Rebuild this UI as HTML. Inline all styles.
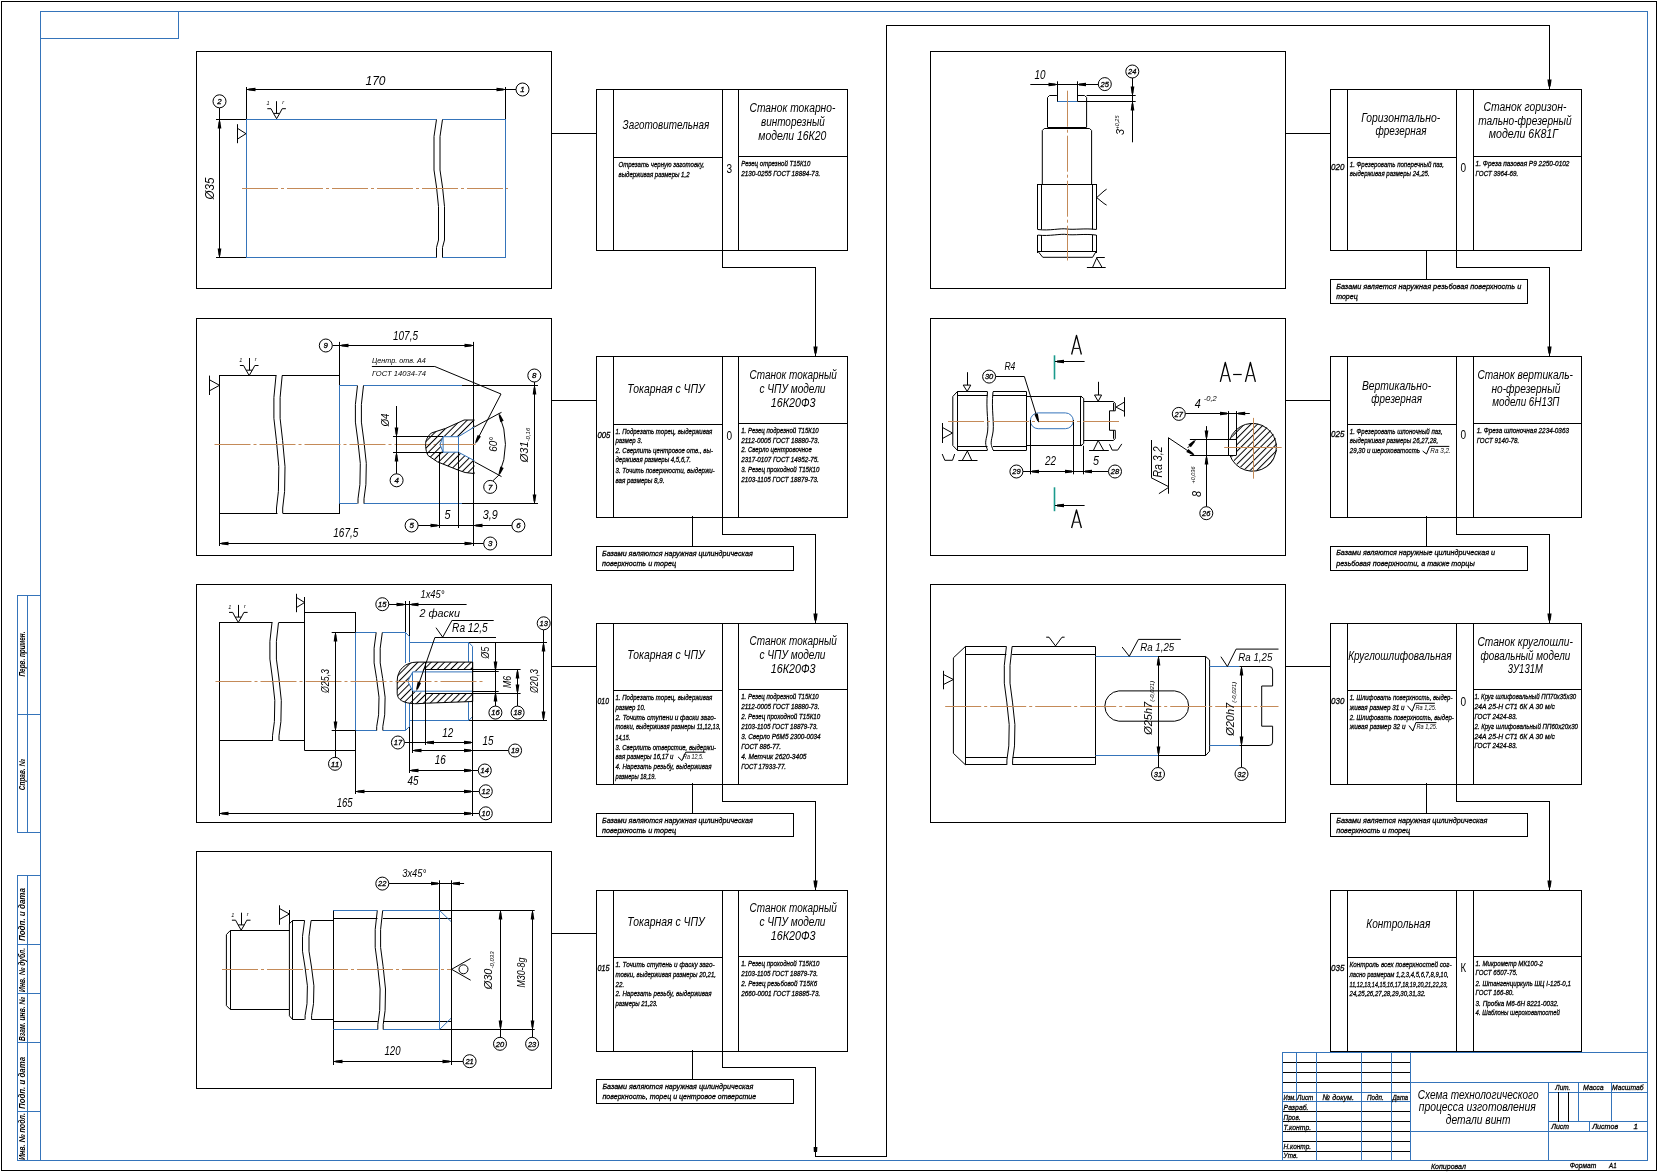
<!DOCTYPE html>
<html><head><meta charset="utf-8"><style>
html,body{margin:0;padding:0;background:#fff;}
svg{display:block;will-change:transform;font-family:"Liberation Sans",sans-serif;}
.t{font-family:"Liberation Sans",sans-serif;font-style:italic;}
.s{stroke:#000;stroke-width:0.3px;}
.w{}
.u{font-family:"Liberation Sans",sans-serif;}
</style></head><body>
<svg width="1658" height="1172" viewBox="0 0 1658 1172">
<rect width="1658" height="1172" fill="#fff"/>
<rect x="1.5" y="1.5" width="1655" height="1169" fill="none" stroke="#000" stroke-width="1"/>
<rect x="40.5" y="11.5" width="1607" height="1149" fill="none" stroke="#3574ba" stroke-width="1"/>
<line x1="40" y1="38.5" x2="179" y2="38.5" stroke="#3574ba" stroke-width="1"/>
<line x1="178.5" y1="11" x2="178.5" y2="39" stroke="#3574ba" stroke-width="1"/>
<line x1="17.5" y1="595" x2="17.5" y2="833" stroke="#3574ba" stroke-width="1"/>
<line x1="27.5" y1="595" x2="27.5" y2="833" stroke="#3574ba" stroke-width="1"/>
<line x1="17" y1="595.5" x2="41" y2="595.5" stroke="#3574ba" stroke-width="1"/>
<line x1="17" y1="714.5" x2="41" y2="714.5" stroke="#3574ba" stroke-width="1"/>
<line x1="17" y1="832.5" x2="41" y2="832.5" stroke="#3574ba" stroke-width="1"/>
<line x1="17.5" y1="875" x2="17.5" y2="1161" stroke="#3574ba" stroke-width="1"/>
<line x1="27.5" y1="875" x2="27.5" y2="1161" stroke="#3574ba" stroke-width="1"/>
<line x1="17" y1="875.5" x2="41" y2="875.5" stroke="#3574ba" stroke-width="1"/>
<line x1="17" y1="944.5" x2="41" y2="944.5" stroke="#3574ba" stroke-width="1"/>
<line x1="17" y1="993.5" x2="41" y2="993.5" stroke="#3574ba" stroke-width="1"/>
<line x1="17" y1="1042.5" x2="41" y2="1042.5" stroke="#3574ba" stroke-width="1"/>
<line x1="17" y1="1111.5" x2="41" y2="1111.5" stroke="#3574ba" stroke-width="1"/>
<line x1="17" y1="1160.5" x2="41" y2="1160.5" stroke="#3574ba" stroke-width="1"/>
<rect x="196.5" y="51.5" width="355" height="237" fill="none" stroke="#000" stroke-width="1"/>
<rect x="196.5" y="318.5" width="355" height="237" fill="none" stroke="#000" stroke-width="1"/>
<rect x="196.5" y="584.5" width="355" height="238" fill="none" stroke="#000" stroke-width="1"/>
<rect x="196.5" y="851.5" width="355" height="237" fill="none" stroke="#000" stroke-width="1"/>
<rect x="930.5" y="51.5" width="355" height="237" fill="none" stroke="#000" stroke-width="1"/>
<rect x="930.5" y="318.5" width="355" height="237" fill="none" stroke="#000" stroke-width="1"/>
<rect x="930.5" y="584.5" width="355" height="238" fill="none" stroke="#000" stroke-width="1"/>
<rect x="596.5" y="89.5" width="251" height="161" fill="none" stroke="#000" stroke-width="1"/>
<line x1="613.5" y1="89" x2="613.5" y2="251" stroke="#000" stroke-width="1"/>
<line x1="722.5" y1="89" x2="722.5" y2="251" stroke="#000" stroke-width="1"/>
<line x1="738.5" y1="89" x2="738.5" y2="251" stroke="#000" stroke-width="1"/>
<line x1="613" y1="157.5" x2="723" y2="157.5" stroke="#000" stroke-width="1"/>
<line x1="738" y1="156.5" x2="848" y2="156.5" stroke="#000" stroke-width="1"/>
<rect x="1330.5" y="89.5" width="251" height="161" fill="none" stroke="#000" stroke-width="1"/>
<line x1="1347.5" y1="89" x2="1347.5" y2="251" stroke="#000" stroke-width="1"/>
<line x1="1456.5" y1="89" x2="1456.5" y2="251" stroke="#000" stroke-width="1"/>
<line x1="1473.5" y1="89" x2="1473.5" y2="251" stroke="#000" stroke-width="1"/>
<line x1="1347" y1="157.5" x2="1457" y2="157.5" stroke="#000" stroke-width="1"/>
<line x1="1473" y1="156.5" x2="1582" y2="156.5" stroke="#000" stroke-width="1"/>
<rect x="596.5" y="356.5" width="251" height="161" fill="none" stroke="#000" stroke-width="1"/>
<line x1="613.5" y1="356" x2="613.5" y2="518" stroke="#000" stroke-width="1"/>
<line x1="722.5" y1="356" x2="722.5" y2="518" stroke="#000" stroke-width="1"/>
<line x1="738.5" y1="356" x2="738.5" y2="518" stroke="#000" stroke-width="1"/>
<line x1="613" y1="424.5" x2="723" y2="424.5" stroke="#000" stroke-width="1"/>
<line x1="738" y1="423.5" x2="848" y2="423.5" stroke="#000" stroke-width="1"/>
<rect x="1330.5" y="356.5" width="251" height="161" fill="none" stroke="#000" stroke-width="1"/>
<line x1="1347.5" y1="356" x2="1347.5" y2="518" stroke="#000" stroke-width="1"/>
<line x1="1456.5" y1="356" x2="1456.5" y2="518" stroke="#000" stroke-width="1"/>
<line x1="1473.5" y1="356" x2="1473.5" y2="518" stroke="#000" stroke-width="1"/>
<line x1="1347" y1="424.5" x2="1457" y2="424.5" stroke="#000" stroke-width="1"/>
<line x1="1473" y1="423.5" x2="1582" y2="423.5" stroke="#000" stroke-width="1"/>
<rect x="596.5" y="623.5" width="251" height="161" fill="none" stroke="#000" stroke-width="1"/>
<line x1="613.5" y1="623" x2="613.5" y2="785" stroke="#000" stroke-width="1"/>
<line x1="722.5" y1="623" x2="722.5" y2="785" stroke="#000" stroke-width="1"/>
<line x1="738.5" y1="623" x2="738.5" y2="785" stroke="#000" stroke-width="1"/>
<line x1="613" y1="690.5" x2="723" y2="690.5" stroke="#000" stroke-width="1"/>
<line x1="738" y1="689.5" x2="848" y2="689.5" stroke="#000" stroke-width="1"/>
<rect x="1330.5" y="623.5" width="251" height="161" fill="none" stroke="#000" stroke-width="1"/>
<line x1="1347.5" y1="623" x2="1347.5" y2="785" stroke="#000" stroke-width="1"/>
<line x1="1456.5" y1="623" x2="1456.5" y2="785" stroke="#000" stroke-width="1"/>
<line x1="1473.5" y1="623" x2="1473.5" y2="785" stroke="#000" stroke-width="1"/>
<line x1="1347" y1="690.5" x2="1457" y2="690.5" stroke="#000" stroke-width="1"/>
<line x1="1473" y1="689.5" x2="1582" y2="689.5" stroke="#000" stroke-width="1"/>
<rect x="596.5" y="890.5" width="251" height="161" fill="none" stroke="#000" stroke-width="1"/>
<line x1="613.5" y1="890" x2="613.5" y2="1052" stroke="#000" stroke-width="1"/>
<line x1="722.5" y1="890" x2="722.5" y2="1052" stroke="#000" stroke-width="1"/>
<line x1="738.5" y1="890" x2="738.5" y2="1052" stroke="#000" stroke-width="1"/>
<line x1="613" y1="957.5" x2="723" y2="957.5" stroke="#000" stroke-width="1"/>
<line x1="738" y1="956.5" x2="848" y2="956.5" stroke="#000" stroke-width="1"/>
<rect x="1330.5" y="890.5" width="251" height="161" fill="none" stroke="#000" stroke-width="1"/>
<line x1="1347.5" y1="890" x2="1347.5" y2="1052" stroke="#000" stroke-width="1"/>
<line x1="1456.5" y1="890" x2="1456.5" y2="1052" stroke="#000" stroke-width="1"/>
<line x1="1473.5" y1="890" x2="1473.5" y2="1052" stroke="#000" stroke-width="1"/>
<line x1="1347" y1="957.5" x2="1457" y2="957.5" stroke="#000" stroke-width="1"/>
<line x1="1473" y1="956.5" x2="1582" y2="956.5" stroke="#000" stroke-width="1"/>
<line x1="551" y1="133.5" x2="597" y2="133.5" stroke="#000" stroke-width="1"/>
<line x1="551" y1="400.5" x2="597" y2="400.5" stroke="#000" stroke-width="1"/>
<line x1="551" y1="666.5" x2="597" y2="666.5" stroke="#000" stroke-width="1"/>
<line x1="551" y1="933.5" x2="597" y2="933.5" stroke="#000" stroke-width="1"/>
<line x1="1285" y1="133.5" x2="1331" y2="133.5" stroke="#000" stroke-width="1"/>
<line x1="1285" y1="400.5" x2="1331" y2="400.5" stroke="#000" stroke-width="1"/>
<line x1="1285" y1="666.5" x2="1331" y2="666.5" stroke="#000" stroke-width="1"/>
<line x1="722.5" y1="250" x2="722.5" y2="268" stroke="#000" stroke-width="1"/>
<line x1="722" y1="267.5" x2="816" y2="267.5" stroke="#000" stroke-width="1"/>
<line x1="815.5" y1="267" x2="815.5" y2="357" stroke="#000" stroke-width="1"/>
<path d="M813.4 346.5 L817.6 346.5 L816.6 353.5 L814.4 353.5 Z" fill="#000"/>
<line x1="722.5" y1="517" x2="722.5" y2="535" stroke="#000" stroke-width="1"/>
<line x1="722" y1="534.5" x2="816" y2="534.5" stroke="#000" stroke-width="1"/>
<line x1="815.5" y1="534" x2="815.5" y2="624" stroke="#000" stroke-width="1"/>
<path d="M813.4 613.5 L817.6 613.5 L816.6 620.5 L814.4 620.5 Z" fill="#000"/>
<line x1="722.5" y1="784" x2="722.5" y2="802" stroke="#000" stroke-width="1"/>
<line x1="722" y1="801.5" x2="816" y2="801.5" stroke="#000" stroke-width="1"/>
<line x1="815.5" y1="801" x2="815.5" y2="891" stroke="#000" stroke-width="1"/>
<path d="M813.4 880.5 L817.6 880.5 L816.6 887.5 L814.4 887.5 Z" fill="#000"/>
<line x1="722.5" y1="1050" x2="722.5" y2="1068" stroke="#000" stroke-width="1"/>
<line x1="722" y1="1067.5" x2="816" y2="1067.5" stroke="#000" stroke-width="1"/>
<line x1="815.5" y1="1067" x2="815.5" y2="1157" stroke="#000" stroke-width="1"/>
<line x1="815" y1="1156.5" x2="887" y2="1156.5" stroke="#000" stroke-width="1"/>
<path d="M813.6 1147 L817.4 1147 L817.1 1152 L813.9 1152 Z" fill="#000"/>
<line x1="886.5" y1="25" x2="886.5" y2="1157" stroke="#000" stroke-width="1"/>
<line x1="886" y1="25.5" x2="1550" y2="25.5" stroke="#000" stroke-width="1"/>
<line x1="1549.5" y1="25" x2="1549.5" y2="90" stroke="#000" stroke-width="1"/>
<path d="M1547.4 79.5 L1551.6 79.5 L1550.6 86.5 L1548.4 86.5 Z" fill="#000"/>
<line x1="1456.5" y1="250" x2="1456.5" y2="268" stroke="#000" stroke-width="1"/>
<line x1="1456" y1="267.5" x2="1550" y2="267.5" stroke="#000" stroke-width="1"/>
<line x1="1549.5" y1="267" x2="1549.5" y2="357" stroke="#000" stroke-width="1"/>
<path d="M1547.4 346.5 L1551.6 346.5 L1550.6 353.5 L1548.4 353.5 Z" fill="#000"/>
<line x1="1456.5" y1="517" x2="1456.5" y2="535" stroke="#000" stroke-width="1"/>
<line x1="1456" y1="534.5" x2="1550" y2="534.5" stroke="#000" stroke-width="1"/>
<line x1="1549.5" y1="534" x2="1549.5" y2="624" stroke="#000" stroke-width="1"/>
<path d="M1547.4 613.5 L1551.6 613.5 L1550.6 620.5 L1548.4 620.5 Z" fill="#000"/>
<line x1="1456.5" y1="784" x2="1456.5" y2="802" stroke="#000" stroke-width="1"/>
<line x1="1456" y1="801.5" x2="1550" y2="801.5" stroke="#000" stroke-width="1"/>
<line x1="1549.5" y1="801" x2="1549.5" y2="891" stroke="#000" stroke-width="1"/>
<path d="M1547.4 880.5 L1551.6 880.5 L1550.6 887.5 L1548.4 887.5 Z" fill="#000"/>
<rect x="596.5" y="546.5" width="197" height="24" fill="none" stroke="#000" stroke-width="1"/>
<rect x="596.5" y="813.5" width="197" height="23" fill="none" stroke="#000" stroke-width="1"/>
<rect x="596.5" y="1079.5" width="197" height="24" fill="none" stroke="#000" stroke-width="1"/>
<line x1="692.5" y1="516" x2="692.5" y2="547" stroke="#000" stroke-width="1"/>
<line x1="692.5" y1="783" x2="692.5" y2="814" stroke="#000" stroke-width="1"/>
<line x1="692.5" y1="1050" x2="692.5" y2="1080" stroke="#000" stroke-width="1"/>
<rect x="1330.5" y="279.5" width="197" height="24" fill="none" stroke="#000" stroke-width="1"/>
<rect x="1330.5" y="546.5" width="197" height="24" fill="none" stroke="#000" stroke-width="1"/>
<rect x="1330.5" y="813.5" width="197" height="23" fill="none" stroke="#000" stroke-width="1"/>
<line x1="1426.5" y1="250" x2="1426.5" y2="280" stroke="#000" stroke-width="1"/>
<line x1="1426.5" y1="516" x2="1426.5" y2="547" stroke="#000" stroke-width="1"/>
<line x1="1426.5" y1="783" x2="1426.5" y2="814" stroke="#000" stroke-width="1"/>
<line x1="1282" y1="1052.5" x2="1648" y2="1052.5" stroke="#3574ba" stroke-width="1"/>
<line x1="1282" y1="1062.5" x2="1411" y2="1062.5" stroke="#000" stroke-width="1"/>
<line x1="1282" y1="1072.5" x2="1411" y2="1072.5" stroke="#000" stroke-width="1"/>
<line x1="1282" y1="1111.5" x2="1411" y2="1111.5" stroke="#000" stroke-width="1"/>
<line x1="1282" y1="1121.5" x2="1411" y2="1121.5" stroke="#000" stroke-width="1"/>
<line x1="1282" y1="1141.5" x2="1411" y2="1141.5" stroke="#000" stroke-width="1"/>
<line x1="1282" y1="1151.5" x2="1411" y2="1151.5" stroke="#000" stroke-width="1"/>
<line x1="1282" y1="1092.5" x2="1411" y2="1092.5" stroke="#3574ba" stroke-width="1"/>
<line x1="1282" y1="1101.5" x2="1411" y2="1101.5" stroke="#3574ba" stroke-width="1"/>
<line x1="1410" y1="1082.5" x2="1648" y2="1082.5" stroke="#3574ba" stroke-width="1"/>
<line x1="1283" y1="1082.5" x2="1410" y2="1082.5" stroke="#000" stroke-width="1"/>
<line x1="1410" y1="1131.5" x2="1648" y2="1131.5" stroke="#3574ba" stroke-width="1"/>
<line x1="1283" y1="1131.5" x2="1410" y2="1131.5" stroke="#000" stroke-width="1"/>
<line x1="1548.5" y1="1082" x2="1548.5" y2="1161" stroke="#3574ba" stroke-width="1"/>
<line x1="1548" y1="1092.5" x2="1648" y2="1092.5" stroke="#3574ba" stroke-width="1"/>
<line x1="1548" y1="1121.5" x2="1648" y2="1121.5" stroke="#3574ba" stroke-width="1"/>
<line x1="1578.5" y1="1082" x2="1578.5" y2="1122" stroke="#3574ba" stroke-width="1"/>
<line x1="1611.5" y1="1082" x2="1611.5" y2="1122" stroke="#3574ba" stroke-width="1"/>
<line x1="1589.5" y1="1121" x2="1589.5" y2="1132" stroke="#3574ba" stroke-width="1"/>
<line x1="1558.5" y1="1092" x2="1558.5" y2="1122" stroke="#000" stroke-width="1"/>
<line x1="1568.5" y1="1092" x2="1568.5" y2="1122" stroke="#000" stroke-width="1"/>
<line x1="1282.5" y1="1052" x2="1282.5" y2="1161" stroke="#3574ba" stroke-width="1"/>
<line x1="1316.5" y1="1052" x2="1316.5" y2="1161" stroke="#3574ba" stroke-width="1"/>
<line x1="1361.5" y1="1052" x2="1361.5" y2="1161" stroke="#3574ba" stroke-width="1"/>
<line x1="1391.5" y1="1052" x2="1391.5" y2="1161" stroke="#3574ba" stroke-width="1"/>
<line x1="1410.5" y1="1052" x2="1410.5" y2="1161" stroke="#3574ba" stroke-width="1"/>
<line x1="1296.5" y1="1052" x2="1296.5" y2="1102" stroke="#3574ba" stroke-width="1"/>
<text x="622.6" y="128.8" font-size="13.5" fill="#000" textLength="86.6" lengthAdjust="spacingAndGlyphs" class="t w">Заготовительная</text>
<text x="749.5" y="112.1" font-size="12.5" fill="#000" textLength="85.9" lengthAdjust="spacingAndGlyphs" class="t w">Станок токарно-</text>
<text x="761.0" y="125.8" font-size="12.5" fill="#000" textLength="63.8" lengthAdjust="spacingAndGlyphs" class="t w">винторезный</text>
<text x="758.3" y="139.6" font-size="12.5" fill="#000" textLength="68.0" lengthAdjust="spacingAndGlyphs" class="t w">модели 16К20</text>
<text x="618.5" y="167.3" font-size="7.8" fill="#000" textLength="85.7" lengthAdjust="spacingAndGlyphs" class="t s">Отрезать черную заготовку,</text>
<text x="618.5" y="177.2" font-size="7.8" fill="#000" textLength="71.0" lengthAdjust="spacingAndGlyphs" class="t s">выдерживая размеры 1,2</text>
<text x="741.2" y="165.8" font-size="7.8" fill="#000" textLength="69.1" lengthAdjust="spacingAndGlyphs" class="t s">Резец отрезной Т15К10</text>
<text x="741.2" y="175.9" font-size="7.8" fill="#000" textLength="79.0" lengthAdjust="spacingAndGlyphs" class="t s">2130-0255 ГОСТ 18884-73.</text>
<text x="627.2" y="392.8" font-size="13" fill="#000" textLength="77.5" lengthAdjust="spacingAndGlyphs" class="t w">Токарная с ЧПУ</text>
<text x="749.5" y="379.1" font-size="12.5" fill="#000" textLength="87.4" lengthAdjust="spacingAndGlyphs" class="t w">Станок токарный</text>
<text x="759.4" y="392.8" font-size="12.5" fill="#000" textLength="66.1" lengthAdjust="spacingAndGlyphs" class="t w">с ЧПУ модели</text>
<text x="770.8" y="406.5" font-size="12.5" fill="#000" textLength="44.8" lengthAdjust="spacingAndGlyphs" class="t w">16К20Ф3</text>
<text x="597.5" y="438.0" font-size="9" fill="#000" textLength="12.9" lengthAdjust="spacingAndGlyphs" class="t s">005</text>
<text x="615.5" y="434.3" font-size="7.8" fill="#000" textLength="96.8" lengthAdjust="spacingAndGlyphs" class="t s">1. Подрезать торец, выдерживая</text>
<text x="615.5" y="443.1" font-size="7.8" fill="#000" textLength="26.9" lengthAdjust="spacingAndGlyphs" class="t s">размер 3.</text>
<text x="615.5" y="453.3" font-size="7.8" fill="#000" textLength="97.5" lengthAdjust="spacingAndGlyphs" class="t s">2. Сверлить центровое отв., вы-</text>
<text x="615.5" y="462.4" font-size="7.8" fill="#000" textLength="75.5" lengthAdjust="spacingAndGlyphs" class="t s">держивая размеры 4,5,6,7.</text>
<text x="615.5" y="473.0" font-size="7.8" fill="#000" textLength="99.1" lengthAdjust="spacingAndGlyphs" class="t s">3. Точить поверхности, выдержи-</text>
<text x="615.5" y="482.9" font-size="7.8" fill="#000" textLength="48.9" lengthAdjust="spacingAndGlyphs" class="t s">вая размеры 8,9.</text>
<text x="741.2" y="432.8" font-size="7.8" fill="#000" textLength="77.5" lengthAdjust="spacingAndGlyphs" class="t s">1. Резец подрезной Т15К10</text>
<text x="741.2" y="442.6" font-size="7.8" fill="#000" textLength="78.2" lengthAdjust="spacingAndGlyphs" class="t s">2112-0005 ГОСТ 18880-73.</text>
<text x="741.2" y="452.0" font-size="7.8" fill="#000" textLength="70.6" lengthAdjust="spacingAndGlyphs" class="t s">2. Сверло центровочное</text>
<text x="741.2" y="461.6" font-size="7.8" fill="#000" textLength="77.9" lengthAdjust="spacingAndGlyphs" class="t s">2317-0107 ГОСТ 14952-75.</text>
<text x="741.2" y="472.3" font-size="7.8" fill="#000" textLength="78.2" lengthAdjust="spacingAndGlyphs" class="t s">3. Резец проходной Т15К10</text>
<text x="741.2" y="481.9" font-size="7.8" fill="#000" textLength="77.5" lengthAdjust="spacingAndGlyphs" class="t s">2103-1105 ГОСТ 18879-73.</text>
<text x="627.2" y="658.8" font-size="13" fill="#000" textLength="77.5" lengthAdjust="spacingAndGlyphs" class="t w">Токарная с ЧПУ</text>
<text x="749.5" y="645.1" font-size="12.5" fill="#000" textLength="87.4" lengthAdjust="spacingAndGlyphs" class="t w">Станок токарный</text>
<text x="759.4" y="658.8" font-size="12.5" fill="#000" textLength="66.1" lengthAdjust="spacingAndGlyphs" class="t w">с ЧПУ модели</text>
<text x="770.8" y="672.5" font-size="12.5" fill="#000" textLength="44.8" lengthAdjust="spacingAndGlyphs" class="t w">16К20Ф3</text>
<text x="597.5" y="704.3" font-size="9" fill="#000" textLength="11.5" lengthAdjust="spacingAndGlyphs" class="t s">010</text>
<text x="615.5" y="699.8" font-size="7.8" fill="#000" textLength="96.8" lengthAdjust="spacingAndGlyphs" class="t s">1. Подрезать торец, выдерживая</text>
<text x="615.5" y="709.6" font-size="7.8" fill="#000" textLength="29.9" lengthAdjust="spacingAndGlyphs" class="t s">размер 10.</text>
<text x="615.5" y="720.0" font-size="7.8" fill="#000" textLength="100.5" lengthAdjust="spacingAndGlyphs" class="t s">2. Точить ступени и фаски заго-</text>
<text x="615.5" y="729.4" font-size="7.8" fill="#000" textLength="105.1" lengthAdjust="spacingAndGlyphs" class="t s">товки, выдерживая размеры 11,12,13,</text>
<text x="615.5" y="739.7" font-size="7.8" fill="#000" textLength="14.7" lengthAdjust="spacingAndGlyphs" class="t s">14,15.</text>
<text x="615.5" y="749.9" font-size="7.8" fill="#000" textLength="100.5" lengthAdjust="spacingAndGlyphs" class="t s">3. Сверлить отверстие, выдержи-</text>
<text x="615.5" y="759.0" font-size="7.8" fill="#000" textLength="58.0" lengthAdjust="spacingAndGlyphs" class="t s">вая размеры 16,17 и</text>
<text x="615.5" y="768.9" font-size="7.8" fill="#000" textLength="96.0" lengthAdjust="spacingAndGlyphs" class="t s">4. Нарезать резьбу, выдерживая</text>
<text x="615.5" y="778.8" font-size="7.8" fill="#000" textLength="40.5" lengthAdjust="spacingAndGlyphs" class="t s">размеры 18,19.</text>
<text x="741.2" y="699.0" font-size="7.8" fill="#000" textLength="77.5" lengthAdjust="spacingAndGlyphs" class="t s">1. Резец подрезной Т15К10</text>
<text x="741.2" y="708.9" font-size="7.8" fill="#000" textLength="78.2" lengthAdjust="spacingAndGlyphs" class="t s">2112-0005 ГОСТ 18880-73.</text>
<text x="741.2" y="718.8" font-size="7.8" fill="#000" textLength="79.0" lengthAdjust="spacingAndGlyphs" class="t s">2. Резец проходной Т15К10</text>
<text x="741.2" y="728.6" font-size="7.8" fill="#000" textLength="76.8" lengthAdjust="spacingAndGlyphs" class="t s">2103-1105 ГОСТ 18879-73.</text>
<text x="741.2" y="738.5" font-size="7.8" fill="#000" textLength="79.4" lengthAdjust="spacingAndGlyphs" class="t s">3. Сверло Р6М5 2300-0034</text>
<text x="741.2" y="749.2" font-size="7.8" fill="#000" textLength="39.9" lengthAdjust="spacingAndGlyphs" class="t s">ГОСТ 886-77.</text>
<text x="741.2" y="759.0" font-size="7.8" fill="#000" textLength="65.3" lengthAdjust="spacingAndGlyphs" class="t s">4. Метчик 2620-3405</text>
<text x="741.2" y="768.9" font-size="7.8" fill="#000" textLength="44.8" lengthAdjust="spacingAndGlyphs" class="t s">ГОСТ 17933-77.</text>
<text x="627.2" y="925.8" font-size="13" fill="#000" textLength="77.5" lengthAdjust="spacingAndGlyphs" class="t w">Токарная с ЧПУ</text>
<text x="749.5" y="912.1" font-size="12.5" fill="#000" textLength="87.4" lengthAdjust="spacingAndGlyphs" class="t w">Станок токарный</text>
<text x="759.4" y="925.8" font-size="12.5" fill="#000" textLength="66.1" lengthAdjust="spacingAndGlyphs" class="t w">с ЧПУ модели</text>
<text x="770.8" y="939.5" font-size="12.5" fill="#000" textLength="44.8" lengthAdjust="spacingAndGlyphs" class="t w">16К20Ф3</text>
<text x="597.5" y="971.3" font-size="9" fill="#000" textLength="12.0" lengthAdjust="spacingAndGlyphs" class="t s">015</text>
<text x="615.5" y="966.8" font-size="7.8" fill="#000" textLength="99.1" lengthAdjust="spacingAndGlyphs" class="t s">1. Точить ступень и фаску заго-</text>
<text x="615.5" y="976.6" font-size="7.8" fill="#000" textLength="100.5" lengthAdjust="spacingAndGlyphs" class="t s">товки, выдерживая размеры 20,21,</text>
<text x="615.5" y="986.5" font-size="7.8" fill="#000" textLength="8.6" lengthAdjust="spacingAndGlyphs" class="t s">22.</text>
<text x="615.5" y="996.4" font-size="7.8" fill="#000" textLength="96.0" lengthAdjust="spacingAndGlyphs" class="t s">2. Нарезать резьбу, выдерживая</text>
<text x="615.5" y="1005.5" font-size="7.8" fill="#000" textLength="42.1" lengthAdjust="spacingAndGlyphs" class="t s">размеры 21,23.</text>
<text x="741.2" y="966.0" font-size="7.8" fill="#000" textLength="78.2" lengthAdjust="spacingAndGlyphs" class="t s">1. Резец проходной Т15К10</text>
<text x="741.2" y="975.9" font-size="7.8" fill="#000" textLength="76.8" lengthAdjust="spacingAndGlyphs" class="t s">2103-1105 ГОСТ 18879-73.</text>
<text x="741.2" y="985.8" font-size="7.8" fill="#000" textLength="76.0" lengthAdjust="spacingAndGlyphs" class="t s">2. Резец резьбовой Т15К6</text>
<text x="741.2" y="995.6" font-size="7.8" fill="#000" textLength="79.0" lengthAdjust="spacingAndGlyphs" class="t s">2660-0001 ГОСТ 18885-73.</text>
<text x="1361.2" y="121.7" font-size="12.5" fill="#000" textLength="79.0" lengthAdjust="spacingAndGlyphs" class="t w">Горизонтально-</text>
<text x="1375.6" y="134.6" font-size="12.5" fill="#000" textLength="50.9" lengthAdjust="spacingAndGlyphs" class="t w">фрезерная</text>
<text x="1483.5" y="111.0" font-size="12.5" fill="#000" textLength="82.9" lengthAdjust="spacingAndGlyphs" class="t w">Станок горизон-</text>
<text x="1478.2" y="124.7" font-size="12.5" fill="#000" textLength="93.5" lengthAdjust="spacingAndGlyphs" class="t w">тально-фрезерный</text>
<text x="1488.8" y="138.4" font-size="12.5" fill="#000" textLength="69.2" lengthAdjust="spacingAndGlyphs" class="t w">модели 6К81Г</text>
<text x="1331.0" y="170.3" font-size="9" fill="#000" textLength="13.4" lengthAdjust="spacingAndGlyphs" class="t s">020</text>
<text x="1349.8" y="166.8" font-size="7.8" fill="#000" textLength="94.2" lengthAdjust="spacingAndGlyphs" class="t s">1. Фрезеровать поперечный паз,</text>
<text x="1349.8" y="176.4" font-size="7.8" fill="#000" textLength="79.8" lengthAdjust="spacingAndGlyphs" class="t s">выдерживая размеры 24,25.</text>
<text x="1475.6" y="165.8" font-size="7.8" fill="#000" textLength="93.8" lengthAdjust="spacingAndGlyphs" class="t s">1. Фреза пазовая Р9 2250-0102</text>
<text x="1475.6" y="175.6" font-size="7.8" fill="#000" textLength="42.6" lengthAdjust="spacingAndGlyphs" class="t s">ГОСТ 3964-69.</text>
<text x="1361.9" y="389.7" font-size="12.5" fill="#000" textLength="69.2" lengthAdjust="spacingAndGlyphs" class="t w">Вертикально-</text>
<text x="1371.3" y="403.4" font-size="12.5" fill="#000" textLength="50.7" lengthAdjust="spacingAndGlyphs" class="t w">фрезерная</text>
<text x="1477.4" y="378.8" font-size="12.5" fill="#000" textLength="95.5" lengthAdjust="spacingAndGlyphs" class="t w">Станок вертикаль-</text>
<text x="1491.4" y="392.5" font-size="12.5" fill="#000" textLength="68.9" lengthAdjust="spacingAndGlyphs" class="t w">но-фрезерный</text>
<text x="1492.3" y="406.2" font-size="12.5" fill="#000" textLength="67.2" lengthAdjust="spacingAndGlyphs" class="t w">модели 6Н13П</text>
<text x="1331.0" y="437.3" font-size="9" fill="#000" textLength="13.4" lengthAdjust="spacingAndGlyphs" class="t s">025</text>
<text x="1349.8" y="434.3" font-size="7.8" fill="#000" textLength="92.7" lengthAdjust="spacingAndGlyphs" class="t s">1. Фрезеровать шпоночный паз,</text>
<text x="1349.8" y="443.4" font-size="7.8" fill="#000" textLength="88.4" lengthAdjust="spacingAndGlyphs" class="t s">выдерживая размеры 26,27,28,</text>
<text x="1349.8" y="452.5" font-size="7.8" fill="#000" textLength="70.2" lengthAdjust="spacingAndGlyphs" class="t s">29,30 и шероховатость</text>
<text x="1476.7" y="432.8" font-size="7.8" fill="#000" textLength="92.3" lengthAdjust="spacingAndGlyphs" class="t s">1. Фреза шпоночная 2234-0363</text>
<text x="1476.7" y="442.6" font-size="7.8" fill="#000" textLength="42.5" lengthAdjust="spacingAndGlyphs" class="t s">ГОСТ 9140-78.</text>
<text x="1348.2" y="659.5" font-size="13" fill="#000" textLength="103.4" lengthAdjust="spacingAndGlyphs" class="t w">Круглошлифовальная</text>
<text x="1477.4" y="645.8" font-size="12.5" fill="#000" textLength="95.5" lengthAdjust="spacingAndGlyphs" class="t w">Станок круглошли-</text>
<text x="1480.5" y="659.5" font-size="12.5" fill="#000" textLength="89.7" lengthAdjust="spacingAndGlyphs" class="t w">фовальный модели</text>
<text x="1507.8" y="673.2" font-size="12.5" fill="#000" textLength="35.0" lengthAdjust="spacingAndGlyphs" class="t w">3У131М</text>
<text x="1331.0" y="704.3" font-size="9" fill="#000" textLength="13.4" lengthAdjust="spacingAndGlyphs" class="t s">030</text>
<text x="1349.8" y="699.8" font-size="7.8" fill="#000" textLength="102.6" lengthAdjust="spacingAndGlyphs" class="t s">1. Шлифовать поверхность, выдер-</text>
<text x="1349.8" y="709.6" font-size="7.8" fill="#000" textLength="54.7" lengthAdjust="spacingAndGlyphs" class="t s">живая размер 31 и</text>
<text x="1349.8" y="719.5" font-size="7.8" fill="#000" textLength="104.1" lengthAdjust="spacingAndGlyphs" class="t s">2. Шлифовать поверхность, выдер-</text>
<text x="1349.8" y="729.4" font-size="7.8" fill="#000" textLength="55.7" lengthAdjust="spacingAndGlyphs" class="t s">живая размер 32 и</text>
<text x="1474.4" y="699.0" font-size="7.8" fill="#000" textLength="101.8" lengthAdjust="spacingAndGlyphs" class="t s">1. Круг шлифовальный ПП70х35х30</text>
<text x="1474.4" y="708.9" font-size="7.8" fill="#000" textLength="80.6" lengthAdjust="spacingAndGlyphs" class="t s">24А 25-Н СТ1 6К  А 30 м/с</text>
<text x="1474.4" y="718.8" font-size="7.8" fill="#000" textLength="42.9" lengthAdjust="spacingAndGlyphs" class="t s">ГОСТ 2424-83.</text>
<text x="1474.4" y="728.6" font-size="7.8" fill="#000" textLength="103.6" lengthAdjust="spacingAndGlyphs" class="t s">2. Круг шлифовальный ПП60х20х30</text>
<text x="1474.4" y="738.5" font-size="7.8" fill="#000" textLength="80.6" lengthAdjust="spacingAndGlyphs" class="t s">24А 25-Н СТ1 6К  А 30 м/с</text>
<text x="1474.4" y="748.4" font-size="7.8" fill="#000" textLength="42.9" lengthAdjust="spacingAndGlyphs" class="t s">ГОСТ 2424-83.</text>
<text x="1366.2" y="927.7" font-size="13" fill="#000" textLength="64.1" lengthAdjust="spacingAndGlyphs" class="t w">Контрольная</text>
<text x="1331.0" y="971.3" font-size="9" fill="#000" textLength="13.4" lengthAdjust="spacingAndGlyphs" class="t s">035</text>
<text x="1349.5" y="966.8" font-size="7.8" fill="#000" textLength="102.1" lengthAdjust="spacingAndGlyphs" class="t s">Контроль всех поверхностей сог-</text>
<text x="1349.5" y="976.6" font-size="7.8" fill="#000" textLength="99.1" lengthAdjust="spacingAndGlyphs" class="t s">ласно размерам 1,2,3,4,5,6,7,8,9,10,</text>
<text x="1349.5" y="986.5" font-size="7.8" fill="#000" textLength="98.3" lengthAdjust="spacingAndGlyphs" class="t s">11,12,13,14,15,16,17,18,19,20,21,22,23,</text>
<text x="1349.5" y="996.4" font-size="7.8" fill="#000" textLength="76.3" lengthAdjust="spacingAndGlyphs" class="t s">24,25,26,27,28,29,30,31,32.</text>
<text x="1475.6" y="966.0" font-size="7.8" fill="#000" textLength="67.2" lengthAdjust="spacingAndGlyphs" class="t s">1. Микрометр МК100-2</text>
<text x="1475.6" y="975.4" font-size="7.8" fill="#000" textLength="42.1" lengthAdjust="spacingAndGlyphs" class="t s">ГОСТ 6507-75.</text>
<text x="1475.6" y="985.8" font-size="7.8" fill="#000" textLength="95.3" lengthAdjust="spacingAndGlyphs" class="t s">2. Штангенциркуль ШЦ I-125-0,1</text>
<text x="1475.6" y="995.2" font-size="7.8" fill="#000" textLength="38.3" lengthAdjust="spacingAndGlyphs" class="t s">ГОСТ 166-80.</text>
<text x="1475.6" y="1005.5" font-size="7.8" fill="#000" textLength="83.2" lengthAdjust="spacingAndGlyphs" class="t s">3. Пробка М6-6Н 8221-0032.</text>
<text x="1475.6" y="1014.9" font-size="7.8" fill="#000" textLength="84.2" lengthAdjust="spacingAndGlyphs" class="t s">4. Шаблоны шероховатостей</text>
<text x="602" y="555.8" font-size="7.5" fill="#000" textLength="150.8" lengthAdjust="spacingAndGlyphs" class="t s">Базами являются наружная цилиндрическая</text>
<text x="602" y="566.0" font-size="7.5" fill="#000" textLength="74.1" lengthAdjust="spacingAndGlyphs" class="t s">поверхность и торец</text>
<text x="602" y="822.8" font-size="7.5" fill="#000" textLength="150.8" lengthAdjust="spacingAndGlyphs" class="t s">Базами являются наружная цилиндрическая</text>
<text x="602" y="833.0" font-size="7.5" fill="#000" textLength="74.1" lengthAdjust="spacingAndGlyphs" class="t s">поверхность и торец</text>
<text x="602.4" y="1089.0" font-size="7.5" fill="#000" textLength="150.9" lengthAdjust="spacingAndGlyphs" class="t s">Базами являются наружная цилиндрическая</text>
<text x="602.4" y="1099.0" font-size="7.5" fill="#000" textLength="153.8" lengthAdjust="spacingAndGlyphs" class="t s">поверхность, торец и центровое отверстие</text>
<text x="1336.2" y="288.5" font-size="7.5" fill="#000" textLength="185.1" lengthAdjust="spacingAndGlyphs" class="t s">Базами является наружная резьбовая поверхность и</text>
<text x="1336.2" y="298.5" font-size="7.5" fill="#000" textLength="21.5" lengthAdjust="spacingAndGlyphs" class="t s">торец</text>
<text x="1336.2" y="555.4" font-size="7.5" fill="#000" textLength="158.8" lengthAdjust="spacingAndGlyphs" class="t s">Базами являются наружные цилиндрическая и</text>
<text x="1336.2" y="566.1" font-size="7.5" fill="#000" textLength="138.5" lengthAdjust="spacingAndGlyphs" class="t s">резьбовая поверхности, а также торцы</text>
<text x="1336.2" y="823.0" font-size="7.5" fill="#000" textLength="151.2" lengthAdjust="spacingAndGlyphs" class="t s">Базами является наружная цилиндрическая</text>
<text x="1336.2" y="833.0" font-size="7.5" fill="#000" textLength="74.0" lengthAdjust="spacingAndGlyphs" class="t s">поверхность и торец</text>
<text x="729.3" y="172.6" font-size="12.5" fill="#000" text-anchor="middle" textLength="5.6" lengthAdjust="spacingAndGlyphs" class="u">3</text>
<text x="729.3" y="439.6" font-size="12.5" fill="#000" text-anchor="middle" textLength="5.6" lengthAdjust="spacingAndGlyphs" class="u">0</text>
<text x="1463.3" y="172.3" font-size="12.5" fill="#000" text-anchor="middle" textLength="5.6" lengthAdjust="spacingAndGlyphs" class="u">0</text>
<text x="1463.3" y="439.3" font-size="12.5" fill="#000" text-anchor="middle" textLength="5.6" lengthAdjust="spacingAndGlyphs" class="u">0</text>
<text x="1463.3" y="705.8" font-size="12.5" fill="#000" text-anchor="middle" textLength="5.6" lengthAdjust="spacingAndGlyphs" class="u">0</text>
<text x="1463.3" y="972.1" font-size="12.5" fill="#000" text-anchor="middle" textLength="5.6" lengthAdjust="spacingAndGlyphs" class="u">К</text>
<line x1="246.0" y1="119.5" x2="436.5" y2="119.5" stroke="#3574ba" stroke-width="1"/>
<line x1="442.5" y1="119.5" x2="505.5" y2="119.5" stroke="#3574ba" stroke-width="1"/>
<line x1="246.0" y1="257.5" x2="436.5" y2="257.5" stroke="#3574ba" stroke-width="1"/>
<line x1="442.5" y1="257.5" x2="505.5" y2="257.5" stroke="#3574ba" stroke-width="1"/>
<line x1="246.5" y1="119.0" x2="246.5" y2="258.0" stroke="#3574ba" stroke-width="1"/>
<line x1="505.5" y1="119.0" x2="505.5" y2="258.0" stroke="#3574ba" stroke-width="1"/>
<path d="M436.5 119.5 L434.0 136.5 L434.0 170.0 L436.5 187.0 L438.5 206.5 L438.5 240.0 L436.5 247.5 L436.5 257.5" fill="none" stroke="#000" stroke-width="1" stroke-linejoin="round"/>
<path d="M442.5 119.5 L440.0 136.5 L440.0 170.0 L442.5 187.0 L444.5 206.5 L444.5 240.0 L442.5 247.5 L442.5 257.5" fill="none" stroke="#000" stroke-width="1" stroke-linejoin="round"/>
<line x1="242.0" y1="188.5" x2="508.0" y2="188.5" stroke="#c48a58" stroke-width="1" stroke-dasharray="36 3 3 3"/>
<line x1="246.5" y1="87.0" x2="246.5" y2="119.0" stroke="#000" stroke-width="1"/>
<line x1="505.5" y1="87.0" x2="505.5" y2="119.0" stroke="#000" stroke-width="1"/>
<line x1="246.5" y1="89.5" x2="516.0" y2="89.5" stroke="#000" stroke-width="1"/>
<path d="M248.5 88.6 L255.5 87.7 L255.5 91.3 L248.5 90.4 Z" fill="#000"/>
<path d="M503.5 90.4 L496.5 91.3 L496.5 87.7 L503.5 88.6 Z" fill="#000"/>
<circle cx="522.5" cy="89.5" r="6.5" fill="#fff" stroke="#000" stroke-width="1"/>
<text x="522.5" y="92.3" font-size="7.8" text-anchor="middle" class="t s" textLength="4.4" lengthAdjust="spacingAndGlyphs">1</text>
<text x="375.5" y="84.6" font-size="12" fill="#000" text-anchor="middle" textLength="20" lengthAdjust="spacingAndGlyphs" class="t">170</text>
<line x1="216.0" y1="119.5" x2="246.0" y2="119.5" stroke="#000" stroke-width="1"/>
<line x1="216.0" y1="257.5" x2="246.0" y2="257.5" stroke="#000" stroke-width="1"/>
<line x1="219.5" y1="108.0" x2="219.5" y2="257.0" stroke="#000" stroke-width="1"/>
<path d="M220.4 121.5 L221.3 128.5 L217.7 128.5 L218.6 121.5 Z" fill="#000"/>
<path d="M218.6 255.5 L217.7 248.5 L221.3 248.5 L220.4 255.5 Z" fill="#000"/>
<circle cx="219.5" cy="101.3" r="6.5" fill="#fff" stroke="#000" stroke-width="1"/>
<text x="219.5" y="104.1" font-size="7.8" text-anchor="middle" class="t s" textLength="4.4" lengthAdjust="spacingAndGlyphs">2</text>
<text x="214.0" y="188.5" font-size="12" fill="#000" text-anchor="middle" textLength="22" lengthAdjust="spacingAndGlyphs" transform="rotate(-90 214.0 188.5)" class="t">Ø35</text>
<line x1="237.5" y1="124.2" x2="237.5" y2="143.2" stroke="#000" stroke-width="1"/>
<path d="M237.3 128.2 L246.0 133.7 L237.3 139.2" fill="none" stroke="#000" stroke-width="1" stroke-linejoin="round"/>
<path d="M267.3 108.7 L271.0 108.7 L273.5 113.4" fill="none" stroke="#000" stroke-width="1" stroke-linejoin="round"/>
<path d="M285.9 108.7 L282.2 108.7 L279.7 113.4" fill="none" stroke="#000" stroke-width="1" stroke-linejoin="round"/>
<path d="M273.5 113.4 L279.7 113.4 L276.6 118.7 L273.5 113.4" fill="none" stroke="#000" stroke-width="1" stroke-linejoin="round"/>
<line x1="276.5" y1="101.2" x2="276.5" y2="113.4" stroke="#000" stroke-width="1"/>
<text x="268.1" y="105.2" font-size="5.5" fill="#000" text-anchor="middle" class="t">1</text>
<text x="283.1" y="104.2" font-size="5.5" fill="#000" text-anchor="middle" class="t">r</text>
<line x1="219.5" y1="375.5" x2="276.5" y2="375.5" stroke="#000" stroke-width="1"/>
<line x1="282.0" y1="375.5" x2="339.5" y2="375.5" stroke="#000" stroke-width="1"/>
<line x1="219.5" y1="513.5" x2="277.5" y2="513.5" stroke="#000" stroke-width="1"/>
<line x1="283.0" y1="513.5" x2="339.5" y2="513.5" stroke="#000" stroke-width="1"/>
<line x1="219.5" y1="375.0" x2="219.5" y2="546.0" stroke="#000" stroke-width="1"/>
<line x1="339.5" y1="341.9" x2="339.5" y2="385.5" stroke="#000" stroke-width="1"/>
<line x1="339.5" y1="503.0" x2="339.5" y2="514.0" stroke="#000" stroke-width="1"/>
<line x1="339.5" y1="385.5" x2="339.5" y2="503.5" stroke="#3574ba" stroke-width="1"/>
<path d="M276.0 375.5 L273.9 397.6 L273.9 418.3 L276.4 440.4 L278.8 466.6 L278.4 491.4 L276.5 508.0 L276.5 513.5" fill="none" stroke="#000" stroke-width="1" stroke-linejoin="round"/>
<path d="M282.2 375.5 L280.1 397.6 L280.1 418.3 L282.6 440.4 L285.0 466.6 L284.6 491.4 L282.7 508.0 L282.7 513.5" fill="none" stroke="#000" stroke-width="1" stroke-linejoin="round"/>
<line x1="339.5" y1="385.5" x2="357.0" y2="385.5" stroke="#3574ba" stroke-width="1"/>
<line x1="363.5" y1="385.5" x2="462.0" y2="385.5" stroke="#3574ba" stroke-width="1"/>
<line x1="462.0" y1="385.5" x2="538.0" y2="385.5" stroke="#000" stroke-width="1"/>
<line x1="339.5" y1="503.5" x2="357.5" y2="503.5" stroke="#3574ba" stroke-width="1"/>
<line x1="363.8" y1="503.5" x2="462.0" y2="503.5" stroke="#3574ba" stroke-width="1"/>
<line x1="462.0" y1="503.5" x2="538.0" y2="503.5" stroke="#000" stroke-width="1"/>
<path d="M357.5 385.5 L355.4 404.4 L355.4 422.1 L357.9 441.0 L360.3 463.4 L359.9 484.6 L358.0 498.8 L358.0 503.5" fill="none" stroke="#000" stroke-width="1" stroke-linejoin="round"/>
<path d="M363.5 385.5 L361.4 404.4 L361.4 422.1 L363.9 441.0 L366.3 463.4 L365.9 484.6 L364.0 498.8 L364.0 503.5" fill="none" stroke="#000" stroke-width="1" stroke-linejoin="round"/>
<line x1="473.5" y1="341.9" x2="473.5" y2="546.0" stroke="#000" stroke-width="1"/>
<line x1="214.5" y1="444.5" x2="478.0" y2="444.5" stroke="#c48a58" stroke-width="1" stroke-dasharray="36 3 3 3"/>
<defs><pattern id="hat" patternUnits="userSpaceOnUse" width="4.7" height="4.7" patternTransform="rotate(45)"><line x1="2.35" y1="-1" x2="2.35" y2="6" stroke="#000" stroke-width="1"/></pattern></defs>
<path d="M474.5 420 L464.1 420 L445.6 428.4 L431.3 433 C426 438 425.6 442 425.6 444.3 C425.6 450 427 454 428.2 455.6 L437.4 461.8 L457.9 470 L465.1 472.5 L474.5 473.6 Z M474.5 426.9 L458.4 436.7 L443.1 436.7 L440 444.5 L443.1 452.2 L458.4 452.2 L474.5 460.7 Z" fill="url(#hat)" fill-rule="evenodd" stroke="none"/>
<path d="M474.5 420 L464.1 420 L445.6 428.4 L431.3 433 C426 438 425.6 442 425.6 444.3 C425.6 450 427 454 428.2 455.6 L437.4 461.8 L457.9 470 L465.1 472.5 L474.5 473.6" fill="none" stroke="#000" stroke-width="1"/>
<path d="M474.5 426.9 L458.4 436.7 L443.1 436.7 L443.1 452.2 L458.4 452.2 L474.5 460.7" fill="none" stroke="#3574ba" stroke-width="1" stroke-linejoin="round"/>
<line x1="458.5" y1="436.7" x2="458.5" y2="452.2" stroke="#3574ba" stroke-width="1"/>
<path d="M443.1 436.7 L440.0 444.5 L443.1 452.2" fill="none" stroke="#3574ba" stroke-width="1" stroke-linejoin="round"/>
<line x1="393.0" y1="436.5" x2="443.0" y2="436.5" stroke="#000" stroke-width="1"/>
<line x1="393.0" y1="452.5" x2="443.0" y2="452.5" stroke="#000" stroke-width="1"/>
<line x1="396.5" y1="406.0" x2="396.5" y2="474.0" stroke="#000" stroke-width="1"/>
<path d="M395.6 434.5 L394.7 427.5 L398.3 427.5 L397.4 434.5 Z" fill="#000"/>
<path d="M397.4 454.5 L398.3 461.5 L394.7 461.5 L395.6 454.5 Z" fill="#000"/>
<circle cx="396.6" cy="480.3" r="6.5" fill="#fff" stroke="#000" stroke-width="1"/>
<text x="396.6" y="483.1" font-size="7.8" text-anchor="middle" class="t s" textLength="4.4" lengthAdjust="spacingAndGlyphs">4</text>
<text x="389.0" y="420.0" font-size="10" fill="#000" text-anchor="middle" textLength="13" lengthAdjust="spacingAndGlyphs" transform="rotate(-90 389.0 420.0)" class="t">Ø4</text>
<line x1="439.5" y1="452.0" x2="439.5" y2="528.0" stroke="#000" stroke-width="1"/>
<line x1="458.5" y1="452.0" x2="458.5" y2="528.0" stroke="#000" stroke-width="1"/>
<line x1="418.0" y1="525.5" x2="512.0" y2="525.5" stroke="#000" stroke-width="1"/>
<circle cx="411.6" cy="525.5" r="6.5" fill="#fff" stroke="#000" stroke-width="1"/>
<text x="411.6" y="528.3" font-size="7.8" text-anchor="middle" class="t s" textLength="4.4" lengthAdjust="spacingAndGlyphs">5</text>
<circle cx="518.4" cy="525.5" r="6.5" fill="#fff" stroke="#000" stroke-width="1"/>
<text x="518.4" y="528.3" font-size="7.8" text-anchor="middle" class="t s" textLength="4.4" lengthAdjust="spacingAndGlyphs">6</text>
<path d="M437.5 526.4 L430.5 527.3 L430.5 523.7 L437.5 524.6 Z" fill="#000"/>
<path d="M475.5 524.6 L482.5 523.7 L482.5 527.3 L475.5 526.4 Z" fill="#000"/>
<text x="447.5" y="518.8" font-size="12" fill="#000" text-anchor="middle" textLength="6" lengthAdjust="spacingAndGlyphs" class="t">5</text>
<text x="490.2" y="518.8" font-size="12" fill="#000" text-anchor="middle" textLength="15" lengthAdjust="spacingAndGlyphs" class="t">3,9</text>
<line x1="219.5" y1="543.5" x2="484.0" y2="543.5" stroke="#000" stroke-width="1"/>
<path d="M221.5 542.6 L228.5 541.7 L228.5 545.3 L221.5 544.4 Z" fill="#000"/>
<path d="M471.5 544.4 L464.5 545.3 L464.5 541.7 L471.5 542.6 Z" fill="#000"/>
<circle cx="490.2" cy="543.5" r="6.5" fill="#fff" stroke="#000" stroke-width="1"/>
<text x="490.2" y="546.3" font-size="7.8" text-anchor="middle" class="t s" textLength="4.4" lengthAdjust="spacingAndGlyphs">3</text>
<text x="345.8" y="537.3" font-size="12" fill="#000" text-anchor="middle" textLength="25" lengthAdjust="spacingAndGlyphs" class="t">167,5</text>
<line x1="332.5" y1="345.5" x2="473.5" y2="345.5" stroke="#000" stroke-width="1"/>
<path d="M341.5 344.6 L348.5 343.7 L348.5 347.3 L341.5 346.4 Z" fill="#000"/>
<path d="M471.5 346.4 L464.5 347.3 L464.5 343.7 L471.5 344.6 Z" fill="#000"/>
<circle cx="325.8" cy="345.5" r="6.5" fill="#fff" stroke="#000" stroke-width="1"/>
<text x="325.8" y="348.3" font-size="7.8" text-anchor="middle" class="t s" textLength="4.4" lengthAdjust="spacingAndGlyphs">9</text>
<text x="405.5" y="339.7" font-size="12" fill="#000" text-anchor="middle" textLength="25" lengthAdjust="spacingAndGlyphs" class="t">107,5</text>
<line x1="371.9" y1="366.5" x2="434.8" y2="366.5" stroke="#000" stroke-width="1"/>
<path d="M434.8 366.5 L501.0 394.0 L475.4 443.3" fill="none" stroke="#000" stroke-width="1" stroke-linejoin="round"/>
<path d="M475.3 441.6 L477.7 434.9 L480.9 436.6 L476.9 442.4 Z" fill="#000"/>
<text x="371.9" y="362.5" font-size="8" fill="#000" text-anchor="start" textLength="54" lengthAdjust="spacingAndGlyphs" class="t">Центр. отв. А4</text>
<text x="371.9" y="375.5" font-size="8" fill="#000" text-anchor="start" textLength="54" lengthAdjust="spacingAndGlyphs" class="t">ГОСТ 14034-74</text>
<line x1="534.5" y1="382.0" x2="534.5" y2="503.0" stroke="#000" stroke-width="1"/>
<path d="M535.4 387.5 L536.3 394.5 L532.7 394.5 L533.6 387.5 Z" fill="#000"/>
<path d="M533.6 501.5 L532.7 494.5 L536.3 494.5 L535.4 501.5 Z" fill="#000"/>
<circle cx="534.3" cy="375.5" r="6.5" fill="#fff" stroke="#000" stroke-width="1"/>
<text x="534.3" y="378.3" font-size="7.8" text-anchor="middle" class="t s" textLength="4.4" lengthAdjust="spacingAndGlyphs">8</text>
<text x="528.0" y="445.0" font-size="11" fill="#000" text-anchor="middle" transform="rotate(-90 528.0 445.0)" class="t">Ø31<tspan font-size="6" dy="2">-0,16</tspan></text>
<path d="M474.5 426.9 L498.9 413.6 L501.5 412.4" fill="none" stroke="#000" stroke-width="1" stroke-linejoin="round"/>
<path d="M474.5 461.8 L498.9 475.1 L501.5 476.6" fill="none" stroke="#000" stroke-width="1" stroke-linejoin="round"/>
<path d="M498.9 413.6 Q512 444.3 498.9 475.1" fill="none" stroke="#000" stroke-width="1"/>
<path d="M500.3 414.7 L503.7 420.8 L500.4 422.2 L498.6 415.3 Z" fill="#000"/>
<path d="M498.6 473.4 L500.4 466.5 L503.7 467.9 L500.3 474.0 Z" fill="#000"/>
<text x="497.0" y="444.3" font-size="11" fill="#000" text-anchor="middle" textLength="15" lengthAdjust="spacingAndGlyphs" transform="rotate(-90 497.0 444.3)" class="t">60°</text>
<circle cx="490.2" cy="486.9" r="6.5" fill="#fff" stroke="#000" stroke-width="1"/>
<text x="490.2" y="489.7" font-size="7.8" text-anchor="middle" class="t s" textLength="4.4" lengthAdjust="spacingAndGlyphs">7</text>
<line x1="493.0" y1="480.7" x2="498.9" y2="475.1" stroke="#000" stroke-width="1"/>
<line x1="209.5" y1="375.6" x2="209.5" y2="395.0" stroke="#000" stroke-width="1"/>
<path d="M209.5 379.8 L219.5 385.3 L209.5 390.8" fill="none" stroke="#000" stroke-width="1" stroke-linejoin="round"/>
<path d="M239.9 365.5 L243.6 365.5 L246.1 370.2" fill="none" stroke="#000" stroke-width="1" stroke-linejoin="round"/>
<path d="M258.5 365.5 L254.8 365.5 L252.3 370.2" fill="none" stroke="#000" stroke-width="1" stroke-linejoin="round"/>
<path d="M246.1 370.2 L252.3 370.2 L249.2 375.5 L246.1 370.2" fill="none" stroke="#000" stroke-width="1" stroke-linejoin="round"/>
<line x1="249.5" y1="358.0" x2="249.5" y2="370.2" stroke="#000" stroke-width="1"/>
<text x="240.7" y="362.0" font-size="5.5" fill="#000" text-anchor="middle" class="t">1</text>
<text x="255.7" y="361.0" font-size="5.5" fill="#000" text-anchor="middle" class="t">r</text>
<line x1="219.5" y1="622.5" x2="272.5" y2="622.5" stroke="#000" stroke-width="1"/>
<line x1="278.9" y1="622.5" x2="304.6" y2="622.5" stroke="#000" stroke-width="1"/>
<line x1="219.5" y1="740.5" x2="273.0" y2="740.5" stroke="#000" stroke-width="1"/>
<line x1="279.5" y1="740.5" x2="304.6" y2="740.5" stroke="#000" stroke-width="1"/>
<line x1="219.5" y1="622.0" x2="219.5" y2="816.0" stroke="#000" stroke-width="1"/>
<path d="M272.0 622.5 L269.9 641.4 L269.9 659.1 L272.4 678.0 L274.8 700.4 L274.4 721.6 L272.5 735.8 L272.5 740.5" fill="none" stroke="#000" stroke-width="1" stroke-linejoin="round"/>
<path d="M278.5 622.5 L276.4 641.4 L276.4 659.1 L278.9 678.0 L281.3 700.4 L280.9 721.6 L279.0 735.8 L279.0 740.5" fill="none" stroke="#000" stroke-width="1" stroke-linejoin="round"/>
<line x1="304.6" y1="612.5" x2="355.6" y2="612.5" stroke="#000" stroke-width="1"/>
<line x1="304.6" y1="750.5" x2="355.6" y2="750.5" stroke="#000" stroke-width="1"/>
<line x1="304.5" y1="597.0" x2="304.5" y2="750.5" stroke="#000" stroke-width="1"/>
<line x1="355.5" y1="612.0" x2="355.5" y2="632.5" stroke="#000" stroke-width="1"/>
<line x1="355.5" y1="730.0" x2="355.5" y2="794.0" stroke="#000" stroke-width="1"/>
<line x1="355.5" y1="632.5" x2="355.5" y2="730.5" stroke="#3574ba" stroke-width="1"/>
<line x1="355.6" y1="632.5" x2="376.2" y2="632.5" stroke="#3574ba" stroke-width="1"/>
<line x1="382.3" y1="632.5" x2="405.5" y2="632.5" stroke="#3574ba" stroke-width="1"/>
<line x1="355.6" y1="730.5" x2="376.8" y2="730.5" stroke="#3574ba" stroke-width="1"/>
<line x1="383.0" y1="730.5" x2="405.5" y2="730.5" stroke="#3574ba" stroke-width="1"/>
<path d="M376.2 632.5 L374.1 648.2 L374.1 662.9 L376.6 678.6 L379.0 697.2 L378.6 714.8 L376.7 726.6 L376.7 730.5" fill="none" stroke="#000" stroke-width="1" stroke-linejoin="round"/>
<path d="M382.3 632.5 L380.2 648.2 L380.2 662.9 L382.7 678.6 L385.1 697.2 L384.7 714.8 L382.8 726.6 L382.8 730.5" fill="none" stroke="#000" stroke-width="1" stroke-linejoin="round"/>
<line x1="405.5" y1="632.5" x2="405.5" y2="663.0" stroke="#3574ba" stroke-width="1"/>
<line x1="405.5" y1="702.0" x2="405.5" y2="730.5" stroke="#3574ba" stroke-width="1"/>
<path d="M405.5 632.5 L409.1 636.2" fill="none" stroke="#3574ba" stroke-width="1" stroke-linejoin="round"/>
<path d="M405.5 730.5 L409.1 726.8" fill="none" stroke="#3574ba" stroke-width="1" stroke-linejoin="round"/>
<line x1="409.5" y1="636.0" x2="409.5" y2="662.0" stroke="#3574ba" stroke-width="1"/>
<line x1="409.5" y1="703.0" x2="409.5" y2="727.0" stroke="#3574ba" stroke-width="1"/>
<line x1="405.5" y1="601.0" x2="405.5" y2="632.0" stroke="#000" stroke-width="1"/>
<line x1="409.5" y1="601.0" x2="409.5" y2="636.0" stroke="#000" stroke-width="1"/>
<line x1="409.5" y1="727.0" x2="409.5" y2="773.0" stroke="#000" stroke-width="1"/>
<line x1="409.1" y1="642.5" x2="468.8" y2="642.5" stroke="#3574ba" stroke-width="1"/>
<line x1="468.8" y1="642.5" x2="547.0" y2="642.5" stroke="#000" stroke-width="1"/>
<line x1="409.1" y1="720.5" x2="468.8" y2="720.5" stroke="#3574ba" stroke-width="1"/>
<line x1="468.8" y1="720.5" x2="547.0" y2="720.5" stroke="#000" stroke-width="1"/>
<line x1="468.5" y1="642.5" x2="468.5" y2="662.0" stroke="#3574ba" stroke-width="1"/>
<line x1="468.5" y1="702.0" x2="468.5" y2="720.5" stroke="#3574ba" stroke-width="1"/>
<path d="M468.8 642.5 L472.7 646.6" fill="none" stroke="#3574ba" stroke-width="1" stroke-linejoin="round"/>
<path d="M468.8 720.5 L472.7 716.4" fill="none" stroke="#3574ba" stroke-width="1" stroke-linejoin="round"/>
<line x1="472.5" y1="646.6" x2="472.5" y2="662.0" stroke="#3574ba" stroke-width="1"/>
<line x1="472.5" y1="703.0" x2="472.5" y2="716.5" stroke="#3574ba" stroke-width="1"/>
<line x1="472.5" y1="703.0" x2="472.5" y2="816.0" stroke="#000" stroke-width="1"/>
<path d="M472.7 662.1 L417.2 662.1 C405 662.1 397.2 670 397.2 681 L397.2 693.2 C397.2 699 402 703.7 417.2 703.7 L426.6 703.2 L472.7 701.5 Z M472.7 669.7 L425 669.7 L412.7 671.9 L407.8 681.3 L412.7 691.2 L425 693.2 L472.7 693.2 Z" fill="url(#hat)" fill-rule="evenodd" stroke="none"/>
<path d="M472.7 662.1 L417.2 662.1 C405 662.1 397.2 670 397.2 681 L397.2 693.2 C397.2 699 402 703.7 417.2 703.7 L426.6 703.2 L472.7 701.5 Z" fill="none" stroke="#000" stroke-width="1"/>
<line x1="425.0" y1="669.5" x2="472.7" y2="669.5" stroke="#000" stroke-width="1"/>
<line x1="425.0" y1="693.5" x2="472.7" y2="693.5" stroke="#000" stroke-width="1"/>
<path d="M472.7 671.9 L412.7 671.9 L407.8 681.3 L412.7 691.2 L472.7 691.2" fill="none" stroke="#3574ba" stroke-width="1" stroke-linejoin="round"/>
<line x1="412.5" y1="671.9" x2="412.5" y2="691.2" stroke="#3574ba" stroke-width="1"/>
<line x1="472.5" y1="662.0" x2="472.5" y2="703.0" stroke="#000" stroke-width="1"/>
<line x1="425.5" y1="662.0" x2="425.5" y2="745.0" stroke="#000" stroke-width="1"/>
<line x1="412.5" y1="691.0" x2="412.5" y2="753.0" stroke="#000" stroke-width="1"/>
<line x1="215.5" y1="681.5" x2="484.8" y2="681.5" stroke="#c48a58" stroke-width="1" stroke-dasharray="36 3 3 3"/>
<line x1="331.7" y1="632.5" x2="355.6" y2="632.5" stroke="#000" stroke-width="1"/>
<line x1="331.7" y1="730.5" x2="355.6" y2="730.5" stroke="#000" stroke-width="1"/>
<line x1="335.5" y1="632.5" x2="335.5" y2="757.0" stroke="#000" stroke-width="1"/>
<path d="M336.4 634.5 L337.3 641.5 L333.7 641.5 L334.6 634.5 Z" fill="#000"/>
<path d="M334.6 728.5 L333.7 721.5 L337.3 721.5 L336.4 728.5 Z" fill="#000"/>
<circle cx="335.0" cy="763.8" r="6.5" fill="#fff" stroke="#000" stroke-width="1"/>
<text x="335.0" y="766.6" font-size="7.8" text-anchor="middle" class="t s" textLength="8.4" lengthAdjust="spacingAndGlyphs">11</text>
<text x="329.0" y="681.0" font-size="11" fill="#000" text-anchor="middle" textLength="24" lengthAdjust="spacingAndGlyphs" transform="rotate(-90 329.0 681.0)" class="t">Ø25,3</text>
<line x1="543.5" y1="629.8" x2="543.5" y2="720.5" stroke="#000" stroke-width="1"/>
<path d="M544.4 644.5 L545.3 651.5 L541.7 651.5 L542.6 644.5 Z" fill="#000"/>
<path d="M542.6 718.5 L541.7 711.5 L545.3 711.5 L544.4 718.5 Z" fill="#000"/>
<circle cx="543.7" cy="623.3" r="6.5" fill="#fff" stroke="#000" stroke-width="1"/>
<text x="543.7" y="626.1" font-size="7.8" text-anchor="middle" class="t s" textLength="8.4" lengthAdjust="spacingAndGlyphs">13</text>
<text x="537.5" y="681.0" font-size="11" fill="#000" text-anchor="middle" textLength="24" lengthAdjust="spacingAndGlyphs" transform="rotate(-90 537.5 681.0)" class="t">Ø20,3</text>
<line x1="472.7" y1="669.5" x2="520.6" y2="669.5" stroke="#000" stroke-width="1"/>
<line x1="472.7" y1="693.5" x2="520.6" y2="693.5" stroke="#000" stroke-width="1"/>
<line x1="472.7" y1="671.5" x2="498.7" y2="671.5" stroke="#000" stroke-width="1"/>
<line x1="472.7" y1="691.5" x2="498.7" y2="691.5" stroke="#000" stroke-width="1"/>
<line x1="495.5" y1="642.5" x2="495.5" y2="706.0" stroke="#000" stroke-width="1"/>
<path d="M494.6 668.5 L493.7 661.5 L497.3 661.5 L496.4 668.5 Z" fill="#000"/>
<path d="M496.4 694.5 L497.3 701.5 L493.7 701.5 L494.6 694.5 Z" fill="#000"/>
<circle cx="495.4" cy="712.6" r="6.5" fill="#fff" stroke="#000" stroke-width="1"/>
<text x="495.4" y="715.4" font-size="7.8" text-anchor="middle" class="t s" textLength="8.4" lengthAdjust="spacingAndGlyphs">16</text>
<text x="489.0" y="652.7" font-size="10" fill="#000" text-anchor="middle" textLength="12" lengthAdjust="spacingAndGlyphs" transform="rotate(-90 489.0 652.7)" class="t">Ø5</text>
<line x1="517.5" y1="669.7" x2="517.5" y2="706.0" stroke="#000" stroke-width="1"/>
<path d="M518.4 671.5 L519.3 678.5 L515.7 678.5 L516.6 671.5 Z" fill="#000"/>
<path d="M516.6 691.5 L515.7 684.5 L519.3 684.5 L518.4 691.5 Z" fill="#000"/>
<circle cx="517.6" cy="712.6" r="6.5" fill="#fff" stroke="#000" stroke-width="1"/>
<text x="517.6" y="715.4" font-size="7.8" text-anchor="middle" class="t s" textLength="8.4" lengthAdjust="spacingAndGlyphs">18</text>
<text x="510.5" y="682.0" font-size="10" fill="#000" text-anchor="middle" textLength="12" lengthAdjust="spacingAndGlyphs" transform="rotate(-90 510.5 682.0)" class="t">M6</text>
<line x1="389.0" y1="604.5" x2="466.6" y2="604.5" stroke="#000" stroke-width="1"/>
<path d="M403.5 605.4 L396.5 606.3 L396.5 602.7 L403.5 603.6 Z" fill="#000"/>
<path d="M411.5 603.6 L418.5 602.7 L418.5 606.3 L411.5 605.4 Z" fill="#000"/>
<circle cx="382.3" cy="604.2" r="6.5" fill="#fff" stroke="#000" stroke-width="1"/>
<text x="382.3" y="607.0" font-size="7.8" text-anchor="middle" class="t s" textLength="8.4" lengthAdjust="spacingAndGlyphs">15</text>
<text x="420.5" y="598.3" font-size="11" fill="#000" text-anchor="start" textLength="24" lengthAdjust="spacingAndGlyphs" class="t">1x45°</text>
<text x="419.4" y="616.6" font-size="11" fill="#000" text-anchor="start" textLength="40.5" lengthAdjust="spacingAndGlyphs" class="t">2 фаски</text>
<line x1="452.1" y1="620.5" x2="493.7" y2="620.5" stroke="#000" stroke-width="1"/>
<path d="M436.0 627.7 L442.7 637.2 L452.1 620.2" fill="none" stroke="#000" stroke-width="1" stroke-linejoin="round"/>
<line x1="434.9" y1="637.5" x2="496.0" y2="637.5" stroke="#000" stroke-width="1"/>
<path d="M434.9 637.5 L416.6 690.4" fill="none" stroke="#000" stroke-width="1" stroke-linejoin="round"/>
<path d="M416.2 688.7 L417.7 681.8 L421.1 683.0 L417.9 689.3 Z" fill="#000"/>
<text x="452.1" y="632.2" font-size="12" fill="#000" text-anchor="start" textLength="35.5" lengthAdjust="spacingAndGlyphs" class="t">Ra 12,5</text>
<line x1="404.4" y1="742.5" x2="472.7" y2="742.5" stroke="#000" stroke-width="1"/>
<circle cx="397.9" cy="742.5" r="6.5" fill="#fff" stroke="#000" stroke-width="1"/>
<text x="397.9" y="745.3" font-size="7.8" text-anchor="middle" class="t s" textLength="8.4" lengthAdjust="spacingAndGlyphs">17</text>
<path d="M427.0 741.6 L434.0 740.7 L434.0 744.3 L427.0 743.4 Z" fill="#000"/>
<path d="M471.0 743.4 L464.0 744.3 L464.0 740.7 L471.0 741.6 Z" fill="#000"/>
<text x="447.8" y="737.0" font-size="12" fill="#000" text-anchor="middle" textLength="11" lengthAdjust="spacingAndGlyphs" class="t">12</text>
<line x1="412.7" y1="750.5" x2="508.6" y2="750.5" stroke="#000" stroke-width="1"/>
<circle cx="515.1" cy="750.5" r="6.5" fill="#fff" stroke="#000" stroke-width="1"/>
<text x="515.1" y="753.3" font-size="7.8" text-anchor="middle" class="t s" textLength="8.4" lengthAdjust="spacingAndGlyphs">19</text>
<path d="M414.5 749.6 L421.5 748.7 L421.5 752.3 L414.5 751.4 Z" fill="#000"/>
<path d="M471.0 751.4 L464.0 752.3 L464.0 748.7 L471.0 749.6 Z" fill="#000"/>
<text x="488.0" y="744.7" font-size="12" fill="#000" text-anchor="middle" textLength="11" lengthAdjust="spacingAndGlyphs" class="t">15</text>
<line x1="409.5" y1="770.5" x2="478.3" y2="770.5" stroke="#000" stroke-width="1"/>
<circle cx="484.8" cy="770.5" r="6.5" fill="#fff" stroke="#000" stroke-width="1"/>
<text x="484.8" y="773.3" font-size="7.8" text-anchor="middle" class="t s" textLength="8.4" lengthAdjust="spacingAndGlyphs">14</text>
<path d="M411.5 769.6 L418.5 768.7 L418.5 772.3 L411.5 771.4 Z" fill="#000"/>
<path d="M471.0 771.4 L464.0 772.3 L464.0 768.7 L471.0 769.6 Z" fill="#000"/>
<text x="440.2" y="764.2" font-size="12" fill="#000" text-anchor="middle" textLength="11" lengthAdjust="spacingAndGlyphs" class="t">16</text>
<line x1="355.6" y1="791.5" x2="479.3" y2="791.5" stroke="#000" stroke-width="1"/>
<circle cx="485.8" cy="791.3" r="6.5" fill="#fff" stroke="#000" stroke-width="1"/>
<text x="485.8" y="794.1" font-size="7.8" text-anchor="middle" class="t s" textLength="8.4" lengthAdjust="spacingAndGlyphs">12</text>
<path d="M357.5 790.6 L364.5 789.7 L364.5 793.3 L357.5 792.4 Z" fill="#000"/>
<path d="M471.0 792.4 L464.0 793.3 L464.0 789.7 L471.0 790.6 Z" fill="#000"/>
<text x="413.1" y="784.8" font-size="12" fill="#000" text-anchor="middle" textLength="11" lengthAdjust="spacingAndGlyphs" class="t">45</text>
<line x1="219.5" y1="813.5" x2="479.3" y2="813.5" stroke="#000" stroke-width="1"/>
<circle cx="485.8" cy="813.3" r="6.5" fill="#fff" stroke="#000" stroke-width="1"/>
<text x="485.8" y="816.1" font-size="7.8" text-anchor="middle" class="t s" textLength="8.4" lengthAdjust="spacingAndGlyphs">10</text>
<path d="M221.5 812.6 L228.5 811.7 L228.5 815.3 L221.5 814.4 Z" fill="#000"/>
<path d="M471.0 814.4 L464.0 815.3 L464.0 811.7 L471.0 812.6 Z" fill="#000"/>
<text x="344.7" y="807.2" font-size="12" fill="#000" text-anchor="middle" textLength="16" lengthAdjust="spacingAndGlyphs" class="t">165</text>
<line x1="296.5" y1="593.8" x2="296.5" y2="612.2" stroke="#000" stroke-width="1"/>
<path d="M296.5 597.5 L304.6 602.5 L296.5 607.5" fill="none" stroke="#000" stroke-width="1" stroke-linejoin="round"/>
<path d="M229.0 612.4 L232.7 612.4 L235.2 617.1" fill="none" stroke="#000" stroke-width="1" stroke-linejoin="round"/>
<path d="M247.6 612.4 L243.9 612.4 L241.4 617.1" fill="none" stroke="#000" stroke-width="1" stroke-linejoin="round"/>
<path d="M235.2 617.1 L241.4 617.1 L238.3 622.4 L235.2 617.1" fill="none" stroke="#000" stroke-width="1" stroke-linejoin="round"/>
<line x1="238.5" y1="604.9" x2="238.5" y2="617.1" stroke="#000" stroke-width="1"/>
<text x="229.8" y="608.9" font-size="5.5" fill="#000" text-anchor="middle" class="t">1</text>
<text x="244.8" y="607.9" font-size="5.5" fill="#000" text-anchor="middle" class="t">r</text>
<line x1="230.3" y1="930.5" x2="289.4" y2="930.5" stroke="#000" stroke-width="1"/>
<line x1="230.3" y1="1009.5" x2="289.4" y2="1009.5" stroke="#000" stroke-width="1"/>
<path d="M230.3 930.5 L226.4 934.6 L226.4 1005.6 L230.3 1009.5" fill="none" stroke="#000" stroke-width="1" stroke-linejoin="round"/>
<line x1="230.5" y1="930.5" x2="289.5" y2="930.5" stroke="#000" stroke-width="1"/>
<line x1="230.5" y1="930.5" x2="230.5" y2="1009.5" stroke="#000" stroke-width="1"/>
<path d="M289.4 1009.5 L289.4 923.7 L292.6 920.5 L304.6 920.5" fill="none" stroke="#000" stroke-width="1" stroke-linejoin="round"/>
<path d="M289.4 1009.5 L289.4 1015.8 L292.6 1019.5 L304.6 1019.5" fill="none" stroke="#000" stroke-width="1" stroke-linejoin="round"/>
<line x1="292.5" y1="920.5" x2="292.5" y2="1019.5" stroke="#000" stroke-width="1"/>
<line x1="311.1" y1="920.5" x2="333.2" y2="920.5" stroke="#000" stroke-width="1"/>
<line x1="311.5" y1="1019.5" x2="333.2" y2="1019.5" stroke="#000" stroke-width="1"/>
<path d="M304.6 920.5 L302.5 936.3 L302.5 951.2 L305.0 967.0 L307.4 985.8 L307.0 1003.7 L305.1 1015.5 L305.1 1019.5" fill="none" stroke="#000" stroke-width="1" stroke-linejoin="round"/>
<path d="M311.1 920.5 L309.0 936.3 L309.0 951.2 L311.5 967.0 L313.9 985.8 L313.5 1003.7 L311.6 1015.5 L311.6 1019.5" fill="none" stroke="#000" stroke-width="1" stroke-linejoin="round"/>
<line x1="333.5" y1="910.0" x2="333.5" y2="1065.0" stroke="#000" stroke-width="1"/>
<line x1="333.2" y1="910.5" x2="377.3" y2="910.5" stroke="#3574ba" stroke-width="1"/>
<line x1="382.7" y1="910.5" x2="439.6" y2="910.5" stroke="#3574ba" stroke-width="1"/>
<line x1="439.6" y1="910.5" x2="534.7" y2="910.5" stroke="#000" stroke-width="1"/>
<line x1="333.2" y1="1029.5" x2="377.8" y2="1029.5" stroke="#3574ba" stroke-width="1"/>
<line x1="383.2" y1="1029.5" x2="439.6" y2="1029.5" stroke="#3574ba" stroke-width="1"/>
<line x1="439.6" y1="1029.5" x2="534.7" y2="1029.5" stroke="#000" stroke-width="1"/>
<line x1="333.2" y1="918.5" x2="377.5" y2="918.5" stroke="#000" stroke-width="1"/>
<line x1="382.9" y1="918.5" x2="451.1" y2="918.5" stroke="#000" stroke-width="1"/>
<line x1="333.2" y1="1021.5" x2="377.7" y2="1021.5" stroke="#000" stroke-width="1"/>
<line x1="383.1" y1="1021.5" x2="451.1" y2="1021.5" stroke="#000" stroke-width="1"/>
<path d="M377.3 910.5 L375.2 929.5 L375.2 947.4 L377.7 966.4 L380.1 989.0 L379.7 1010.5 L377.8 1024.7 L377.8 1029.5" fill="none" stroke="#000" stroke-width="1" stroke-linejoin="round"/>
<path d="M382.7 910.5 L380.6 929.5 L380.6 947.4 L383.1 966.4 L385.5 989.0 L385.1 1010.5 L383.2 1024.7 L383.2 1029.5" fill="none" stroke="#000" stroke-width="1" stroke-linejoin="round"/>
<line x1="439.5" y1="910.5" x2="439.5" y2="1029.5" stroke="#3574ba" stroke-width="1"/>
<path d="M439.6 910.5 L451.1 921.6" fill="none" stroke="#3574ba" stroke-width="1" stroke-linejoin="round"/>
<path d="M439.6 1029.5 L451.1 1018.2" fill="none" stroke="#3574ba" stroke-width="1" stroke-linejoin="round"/>
<line x1="451.5" y1="880.3" x2="451.5" y2="1065.0" stroke="#000" stroke-width="1"/>
<line x1="439.5" y1="880.3" x2="439.5" y2="910.0" stroke="#000" stroke-width="1"/>
<line x1="222.0" y1="969.5" x2="451.1" y2="969.5" stroke="#c48a58" stroke-width="1" stroke-dasharray="36 3 3 3"/>
<line x1="389.0" y1="883.5" x2="464.1" y2="883.5" stroke="#000" stroke-width="1"/>
<circle cx="382.3" cy="883.6" r="6.5" fill="#fff" stroke="#000" stroke-width="1"/>
<text x="382.3" y="886.4" font-size="7.8" text-anchor="middle" class="t s" textLength="8.4" lengthAdjust="spacingAndGlyphs">22</text>
<path d="M438.0 884.4 L431.0 885.3 L431.0 881.7 L438.0 882.6 Z" fill="#000"/>
<path d="M453.0 882.6 L460.0 881.7 L460.0 885.3 L453.0 884.4 Z" fill="#000"/>
<text x="414.2" y="877.0" font-size="11" fill="#000" text-anchor="middle" textLength="24" lengthAdjust="spacingAndGlyphs" class="t">3x45°</text>
<line x1="333.2" y1="1061.5" x2="463.1" y2="1061.5" stroke="#000" stroke-width="1"/>
<circle cx="469.6" cy="1061.2" r="6.5" fill="#fff" stroke="#000" stroke-width="1"/>
<text x="469.6" y="1064.0" font-size="7.8" text-anchor="middle" class="t s" textLength="8.4" lengthAdjust="spacingAndGlyphs">21</text>
<path d="M335.5 1060.6 L342.5 1059.7 L342.5 1063.3 L335.5 1062.4 Z" fill="#000"/>
<path d="M449.5 1062.4 L442.5 1063.3 L442.5 1059.7 L449.5 1060.6 Z" fill="#000"/>
<text x="392.5" y="1055.1" font-size="12" fill="#000" text-anchor="middle" textLength="16" lengthAdjust="spacingAndGlyphs" class="t">120</text>
<line x1="500.5" y1="910.5" x2="500.5" y2="1037.3" stroke="#000" stroke-width="1"/>
<circle cx="500.0" cy="1043.8" r="6.5" fill="#fff" stroke="#000" stroke-width="1"/>
<text x="500.0" y="1046.6" font-size="7.8" text-anchor="middle" class="t s" textLength="8.4" lengthAdjust="spacingAndGlyphs">20</text>
<path d="M501.4 912.5 L502.3 919.5 L498.7 919.5 L499.6 912.5 Z" fill="#000"/>
<path d="M499.6 1027.5 L498.7 1020.5 L502.3 1020.5 L501.4 1027.5 Z" fill="#000"/>
<text x="492.5" y="970.4" font-size="11" fill="#000" text-anchor="middle" transform="rotate(-90 492.5 970.4)" class="t">Ø30<tspan font-size="6" dy="2">-0,033</tspan></text>
<line x1="532.5" y1="910.5" x2="532.5" y2="1037.3" stroke="#000" stroke-width="1"/>
<circle cx="532.1" cy="1043.8" r="6.5" fill="#fff" stroke="#000" stroke-width="1"/>
<text x="532.1" y="1046.6" font-size="7.8" text-anchor="middle" class="t s" textLength="8.4" lengthAdjust="spacingAndGlyphs">23</text>
<path d="M533.4 912.5 L534.3 919.5 L530.7 919.5 L531.6 912.5 Z" fill="#000"/>
<path d="M531.6 1027.5 L530.7 1020.5 L534.3 1020.5 L533.4 1027.5 Z" fill="#000"/>
<text x="525.0" y="972.6" font-size="11" fill="#000" text-anchor="middle" textLength="30" lengthAdjust="spacingAndGlyphs" transform="rotate(-90 525.0 972.6)" class="t">M30-8g</text>
<path d="M470.6 958.5 L451.6 969.3 L470.6 980.2" fill="none" stroke="#000" stroke-width="1" stroke-linejoin="round"/>
<circle cx="463.5" cy="969.3" r="4.5" fill="none" stroke="#000" stroke-width="1"/>
<line x1="279.5" y1="905.3" x2="279.5" y2="924.8" stroke="#000" stroke-width="1"/>
<line x1="289.5" y1="910.0" x2="289.5" y2="924.0" stroke="#000" stroke-width="1"/>
<path d="M279.5 908.5 L289.4 914.0 L279.5 919.5" fill="none" stroke="#000" stroke-width="1" stroke-linejoin="round"/>
<path d="M231.9 920.2 L235.6 920.2 L238.1 924.9" fill="none" stroke="#000" stroke-width="1" stroke-linejoin="round"/>
<path d="M250.5 920.2 L246.8 920.2 L244.3 924.9" fill="none" stroke="#000" stroke-width="1" stroke-linejoin="round"/>
<path d="M238.1 924.9 L244.3 924.9 L241.2 930.2 L238.1 924.9" fill="none" stroke="#000" stroke-width="1" stroke-linejoin="round"/>
<line x1="241.5" y1="912.7" x2="241.5" y2="924.9" stroke="#000" stroke-width="1"/>
<text x="232.7" y="916.7" font-size="5.5" fill="#000" text-anchor="middle" class="t">1</text>
<text x="247.7" y="915.7" font-size="5.5" fill="#000" text-anchor="middle" class="t">r</text>
<path d="M1056.9 95.5 L1049.5 95.5 L1047.5 97.5 L1047.5 127.2" fill="none" stroke="#000" stroke-width="1" stroke-linejoin="round"/>
<path d="M1077.6 95.5 L1084.6 95.5 L1086.6 97.5 L1086.6 127.2" fill="none" stroke="#000" stroke-width="1" stroke-linejoin="round"/>
<line x1="1057.0" y1="101.5" x2="1077.6" y2="101.5" stroke="#3574ba" stroke-width="1"/>
<line x1="1057.5" y1="81.3" x2="1057.5" y2="101.5" stroke="#000" stroke-width="1"/>
<line x1="1077.5" y1="81.3" x2="1077.5" y2="101.5" stroke="#000" stroke-width="1"/>
<line x1="1047.5" y1="127.5" x2="1086.6" y2="127.5" stroke="#000" stroke-width="1"/>
<path d="M1042.3 184.1 L1042.3 130.5 L1044.3 128.5 L1089.6 128.5 L1091.6 130.5 L1091.6 184.1" fill="none" stroke="#000" stroke-width="1" stroke-linejoin="round"/>
<line x1="1037.8" y1="184.5" x2="1096.3" y2="184.5" stroke="#000" stroke-width="1"/>
<line x1="1037.5" y1="184.0" x2="1037.5" y2="229.5" stroke="#000" stroke-width="1"/>
<line x1="1096.5" y1="184.0" x2="1096.5" y2="229.5" stroke="#000" stroke-width="1"/>
<line x1="1041.5" y1="184.0" x2="1041.5" y2="229.5" stroke="#000" stroke-width="1"/>
<line x1="1092.5" y1="184.0" x2="1092.5" y2="229.5" stroke="#000" stroke-width="1"/>
<path d="M1037.8 229.5 C1050 231 1060 228 1067 229 S1085 228 1096.3 229.5" fill="none" stroke="#000" stroke-width="1"/>
<path d="M1037.8 235.1 C1050 236.5 1060 233.5 1067 234.5 S1085 233.5 1096.3 235.1" fill="none" stroke="#000" stroke-width="1"/>
<line x1="1037.5" y1="235.0" x2="1037.5" y2="253.0" stroke="#000" stroke-width="1"/>
<line x1="1096.5" y1="235.0" x2="1096.5" y2="253.0" stroke="#000" stroke-width="1"/>
<line x1="1041.5" y1="235.0" x2="1041.5" y2="251.1" stroke="#000" stroke-width="1"/>
<line x1="1092.5" y1="235.0" x2="1092.5" y2="251.1" stroke="#000" stroke-width="1"/>
<line x1="1037.8" y1="251.5" x2="1096.3" y2="251.5" stroke="#000" stroke-width="1"/>
<path d="M1037.8 251.1 L1042.8 257.3 L1092.6 257.3 L1096.3 251.1" fill="none" stroke="#000" stroke-width="1" stroke-linejoin="round"/>
<line x1="1067.5" y1="90.7" x2="1067.5" y2="260.5" stroke="#c48a58" stroke-width="1" stroke-dasharray="36 3 3 3"/>
<line x1="1030.3" y1="84.5" x2="1098.3" y2="84.5" stroke="#000" stroke-width="1"/>
<path d="M1055.5 85.4 L1048.5 86.3 L1048.5 82.7 L1055.5 83.6 Z" fill="#000"/>
<path d="M1079.0 83.6 L1086.0 82.7 L1086.0 86.3 L1079.0 85.4 Z" fill="#000"/>
<circle cx="1104.8" cy="84.1" r="6.5" fill="#fff" stroke="#000" stroke-width="1"/>
<text x="1104.8" y="86.9" font-size="7.8" text-anchor="middle" class="t s" textLength="8.4" lengthAdjust="spacingAndGlyphs">25</text>
<text x="1040.0" y="78.5" font-size="12" fill="#000" text-anchor="middle" textLength="11" lengthAdjust="spacingAndGlyphs" class="t">10</text>
<line x1="1086.6" y1="95.5" x2="1135.7" y2="95.5" stroke="#000" stroke-width="1"/>
<line x1="1077.6" y1="101.5" x2="1135.7" y2="101.5" stroke="#000" stroke-width="1"/>
<line x1="1132.5" y1="78.0" x2="1132.5" y2="142.3" stroke="#000" stroke-width="1"/>
<path d="M1131.6 93.5 L1130.7 86.5 L1134.3 86.5 L1133.4 93.5 Z" fill="#000"/>
<path d="M1133.4 103.5 L1134.3 110.5 L1130.7 110.5 L1131.6 103.5 Z" fill="#000"/>
<circle cx="1132.3" cy="71.5" r="6.5" fill="#fff" stroke="#000" stroke-width="1"/>
<text x="1132.3" y="74.3" font-size="7.8" text-anchor="middle" class="t s" textLength="8.4" lengthAdjust="spacingAndGlyphs">24</text>
<text x="1124.0" y="132.0" font-size="11" fill="#000" text-anchor="middle" textLength="6" lengthAdjust="spacingAndGlyphs" transform="rotate(-90 1124.0 132.0)" class="t">3</text>
<text x="1119.0" y="122.5" font-size="6" fill="#000" text-anchor="middle" textLength="14" lengthAdjust="spacingAndGlyphs" transform="rotate(-90 1119.0 122.5)" class="t">+0,25</text>
<path d="M1106.6 189.2 L1104.0 191.0 L1096.7 197.6 L1104.0 203.5 L1106.6 205.1" fill="none" stroke="#000" stroke-width="1" stroke-linejoin="round"/>
<line x1="1086.9" y1="267.5" x2="1105.7" y2="267.5" stroke="#000" stroke-width="1"/>
<path d="M1092.6 267.3 L1096.7 258.0 L1102.0 267.3" fill="none" stroke="#000" stroke-width="1" stroke-linejoin="round"/>
<line x1="1096.3" y1="257.5" x2="1104.8" y2="257.5" stroke="#000" stroke-width="1"/>
<path d="M957.1 391.8 L952.8 396.5 L952.8 445.5 L957.1 450.0" fill="none" stroke="#000" stroke-width="1" stroke-linejoin="round"/>
<line x1="957.1" y1="391.5" x2="987.5" y2="391.5" stroke="#000" stroke-width="1"/>
<line x1="957.1" y1="450.5" x2="987.5" y2="450.5" stroke="#000" stroke-width="1"/>
<line x1="957.5" y1="391.8" x2="957.5" y2="450.0" stroke="#000" stroke-width="1"/>
<line x1="957.1" y1="395.5" x2="987.5" y2="395.5" stroke="#000" stroke-width="1"/>
<line x1="957.1" y1="446.5" x2="987.5" y2="446.5" stroke="#000" stroke-width="1"/>
<path d="M987.5 391.8 C985.5 410 989.5 425 987 435 S986 445 987.5 450" fill="none" stroke="#000" stroke-width="1"/>
<path d="M993 391.8 C991 410 995 425 992.5 435 S991.5 445 993 450" fill="none" stroke="#000" stroke-width="1"/>
<line x1="993.0" y1="391.5" x2="1026.6" y2="391.5" stroke="#000" stroke-width="1"/>
<line x1="993.0" y1="450.5" x2="1026.6" y2="450.5" stroke="#000" stroke-width="1"/>
<line x1="993.0" y1="395.5" x2="1026.6" y2="395.5" stroke="#000" stroke-width="1"/>
<line x1="993.0" y1="446.5" x2="1026.6" y2="446.5" stroke="#000" stroke-width="1"/>
<line x1="1026.5" y1="391.8" x2="1026.5" y2="450.0" stroke="#000" stroke-width="1"/>
<line x1="1026.6" y1="396.5" x2="1082.0" y2="396.5" stroke="#000" stroke-width="1"/>
<line x1="1026.6" y1="445.5" x2="1082.0" y2="445.5" stroke="#000" stroke-width="1"/>
<line x1="1080.5" y1="396.2" x2="1080.5" y2="445.7" stroke="#000" stroke-width="1"/>
<path d="M1080.9 396.2 L1083.7 398.5 L1083.7 443.5 L1080.9 445.7" fill="none" stroke="#000" stroke-width="1" stroke-linejoin="round"/>
<line x1="1083.5" y1="445.7" x2="1083.5" y2="474.3" stroke="#000" stroke-width="1"/>
<path d="M1083.7 401.5 L1113.2 401.5 L1115.3 403.3 L1115.3 410.8 L1109.5 410.8 L1109.5 430.3 L1115.3 430.3 L1115.3 438.6 L1113.2 440.5 L1083.7 440.5" fill="none" stroke="#000" stroke-width="1" stroke-linejoin="round"/>
<line x1="1113.5" y1="403.0" x2="1113.5" y2="410.8" stroke="#000" stroke-width="1"/>
<line x1="1113.5" y1="430.3" x2="1113.5" y2="438.8" stroke="#000" stroke-width="1"/>
<rect x="1030.3" y="412.9" width="43" height="15.8" rx="7.9" fill="none" stroke="#3574ba" stroke-width="1"/>
<line x1="1030.5" y1="420.0" x2="1030.5" y2="474.3" stroke="#000" stroke-width="1"/>
<line x1="1073.5" y1="420.0" x2="1073.5" y2="474.3" stroke="#000" stroke-width="1"/>
<line x1="948.0" y1="421.5" x2="1120.0" y2="421.5" stroke="#c48a58" stroke-width="1" stroke-dasharray="36 3 3 3"/>
<line x1="1022.9" y1="471.5" x2="1108.5" y2="471.5" stroke="#000" stroke-width="1"/>
<circle cx="1016.4" cy="471.5" r="6.5" fill="#fff" stroke="#000" stroke-width="1"/>
<text x="1016.4" y="474.3" font-size="7.8" text-anchor="middle" class="t s" textLength="8.4" lengthAdjust="spacingAndGlyphs">29</text>
<circle cx="1115.0" cy="471.5" r="6.5" fill="#fff" stroke="#000" stroke-width="1"/>
<text x="1115.0" y="474.3" font-size="7.8" text-anchor="middle" class="t s" textLength="8.4" lengthAdjust="spacingAndGlyphs">28</text>
<path d="M1032.0 470.6 L1039.0 469.7 L1039.0 473.3 L1032.0 472.4 Z" fill="#000"/>
<path d="M1072.0 472.4 L1065.0 473.3 L1065.0 469.7 L1072.0 470.6 Z" fill="#000"/>
<path d="M1085.0 470.6 L1092.0 469.7 L1092.0 473.3 L1085.0 472.4 Z" fill="#000"/>
<text x="1050.5" y="465.2" font-size="12" fill="#000" text-anchor="middle" textLength="11" lengthAdjust="spacingAndGlyphs" class="t">22</text>
<text x="1096.1" y="465.2" font-size="12" fill="#000" text-anchor="middle" textLength="6" lengthAdjust="spacingAndGlyphs" class="t">5</text>
<line x1="995.6" y1="376.5" x2="1024.4" y2="376.5" stroke="#000" stroke-width="1"/>
<path d="M1024.4 376.6 L1038.6 422.2" fill="none" stroke="#000" stroke-width="1" stroke-linejoin="round"/>
<path d="M1037.3 421.0 L1034.4 414.6 L1037.8 413.5 L1039.0 420.5 Z" fill="#000"/>
<text x="1009.9" y="370.1" font-size="11" fill="#000" text-anchor="middle" textLength="11" lengthAdjust="spacingAndGlyphs" class="t">R4</text>
<circle cx="989.1" cy="376.6" r="6.5" fill="#fff" stroke="#000" stroke-width="1"/>
<text x="989.1" y="379.4" font-size="7.8" text-anchor="middle" class="t s" textLength="8.4" lengthAdjust="spacingAndGlyphs">30</text>
<line x1="967.5" y1="372.2" x2="967.5" y2="385.1" stroke="#000" stroke-width="1"/>
<path d="M963.2 385.1 L970.8 385.1 L967.2 391.3 L963.2 385.1" fill="none" stroke="#000" stroke-width="1" stroke-linejoin="round"/>
<line x1="1098.5" y1="381.8" x2="1098.5" y2="395.0" stroke="#000" stroke-width="1"/>
<path d="M1094.5 395.0 L1101.6 395.0 L1098.2 401.3 L1094.5 395.0" fill="none" stroke="#000" stroke-width="1" stroke-linejoin="round"/>
<line x1="942.5" y1="423.0" x2="942.5" y2="443.0" stroke="#000" stroke-width="1"/>
<path d="M942.5 427.5 L952.5 433.0 L942.5 438.5" fill="none" stroke="#000" stroke-width="1" stroke-linejoin="round"/>
<line x1="1124.5" y1="397.2" x2="1124.5" y2="416.6" stroke="#000" stroke-width="1"/>
<path d="M1124.5 402.0 L1116.0 407.1 L1124.5 411.5" fill="none" stroke="#000" stroke-width="1" stroke-linejoin="round"/>
<path d="M962.3 460.3 L967.4 451.0 L971.7 460.3" fill="none" stroke="#000" stroke-width="1" stroke-linejoin="round"/>
<line x1="958.3" y1="460.5" x2="977.5" y2="460.5" stroke="#000" stroke-width="1"/>
<path d="M1093.4 450.4 L1098.2 440.5 L1103.7 450.4" fill="none" stroke="#000" stroke-width="1" stroke-linejoin="round"/>
<line x1="1089.0" y1="450.5" x2="1108.8" y2="450.5" stroke="#000" stroke-width="1"/>
<path d="M942.2 454.0 L944.8 460.3 L952.5 460.3 L954.7 454.0" fill="none" stroke="#000" stroke-width="1" stroke-linejoin="round"/>
<path d="M1109.5 444.3 L1112.2 450.1 L1117.7 450.1 L1121.8 443.9" fill="none" stroke="#000" stroke-width="1" stroke-linejoin="round"/>
<line x1="1054.5" y1="355.3" x2="1054.5" y2="379.4" stroke="#1a9a8c" stroke-width="1.6"/>
<line x1="1055.0" y1="361.5" x2="1084.6" y2="361.5" stroke="#000" stroke-width="1"/>
<path d="M1057.0 360.6 L1064.0 359.8 L1064.0 363.2 L1057.0 362.4 Z" fill="#000"/>
<path d="M1071.6 354.5 L1076.5 335.3 L1081.4 354.5" fill="none" stroke="#000" stroke-width="1.3" stroke-linejoin="round"/>
<line x1="1073.8" y1="348.4" x2="1079.2" y2="348.4" stroke="#000" stroke-width="1.0"/>
<line x1="1054.5" y1="487.3" x2="1054.5" y2="511.2" stroke="#1a9a8c" stroke-width="1.6"/>
<line x1="1055.0" y1="505.5" x2="1084.6" y2="505.5" stroke="#000" stroke-width="1"/>
<path d="M1057.0 504.6 L1064.0 503.8 L1064.0 507.2 L1057.0 506.4 Z" fill="#000"/>
<path d="M1071.6 528.0 L1076.5 510.0 L1081.4 528.0" fill="none" stroke="#000" stroke-width="1.3" stroke-linejoin="round"/>
<line x1="1073.8" y1="522.2" x2="1079.2" y2="522.2" stroke="#000" stroke-width="1.0"/>
<path d="M1220.3 381.8 L1225.3 362.5 L1230.3 381.8" fill="none" stroke="#000" stroke-width="1.3" stroke-linejoin="round"/>
<line x1="1222.5" y1="375.6" x2="1228.0" y2="375.6" stroke="#000" stroke-width="1.0"/>
<line x1="1233.1" y1="374.5" x2="1241.7" y2="374.5" stroke="#000" stroke-width="1.2"/>
<path d="M1245.4 381.8 L1250.4 362.5 L1255.4 381.8" fill="none" stroke="#000" stroke-width="1.3" stroke-linejoin="round"/>
<line x1="1247.7" y1="375.6" x2="1253.2" y2="375.6" stroke="#000" stroke-width="1.0"/>
<clipPath id="cpc"><circle cx="1253.4" cy="447.1" r="23.9"/></clipPath>
<pattern id="hat2" patternUnits="userSpaceOnUse" width="4.6" height="4.6" patternTransform="rotate(45)"><line x1="2.3" y1="-1" x2="2.3" y2="6" stroke="#000" stroke-width="1"/></pattern>
<path d="M1229 420 L1290 420 L1290 480 L1229 480 Z M1228.8 439.4 L1236.3 439.4 L1236.3 455.2 L1228.8 455.2 Z" fill="url(#hat2)" fill-rule="evenodd" clip-path="url(#cpc)"/>
<path d="M1229.9 439.4 A23.9 23.9 0 1 1 1229.9 455.2" fill="none" stroke="#000" stroke-width="1"/>
<line x1="1189.9" y1="439.5" x2="1236.3" y2="439.5" stroke="#000" stroke-width="1"/>
<line x1="1189.9" y1="455.5" x2="1236.3" y2="455.5" stroke="#000" stroke-width="1"/>
<line x1="1236.5" y1="411.1" x2="1236.5" y2="455.2" stroke="#000" stroke-width="1"/>
<line x1="1228.5" y1="411.1" x2="1228.5" y2="455.2" stroke="#000" stroke-width="1"/>
<line x1="1224.2" y1="447.5" x2="1281.7" y2="447.5" stroke="#c48a58" stroke-width="1"/>
<line x1="1253.5" y1="417.9" x2="1253.5" y2="478.7" stroke="#c48a58" stroke-width="1"/>
<line x1="1185.3" y1="413.5" x2="1249.8" y2="413.5" stroke="#000" stroke-width="1"/>
<path d="M1227.0 414.4 L1220.0 415.3 L1220.0 411.7 L1227.0 412.6 Z" fill="#000"/>
<path d="M1238.2 412.6 L1245.2 411.7 L1245.2 415.3 L1238.2 414.4 Z" fill="#000"/>
<circle cx="1178.8" cy="413.9" r="6.5" fill="#fff" stroke="#000" stroke-width="1"/>
<text x="1178.8" y="416.7" font-size="7.8" text-anchor="middle" class="t s" textLength="8.4" lengthAdjust="spacingAndGlyphs">27</text>
<text x="1197.7" y="408.3" font-size="12" fill="#000" text-anchor="middle" textLength="6" lengthAdjust="spacingAndGlyphs" class="t">4</text>
<text x="1210.2" y="400.5" font-size="8" fill="#000" text-anchor="middle" textLength="13" lengthAdjust="spacingAndGlyphs" class="t">-0,2</text>
<line x1="1206.5" y1="426.1" x2="1206.5" y2="506.7" stroke="#000" stroke-width="1"/>
<path d="M1205.6 437.5 L1204.7 430.5 L1208.3 430.5 L1207.4 437.5 Z" fill="#000"/>
<path d="M1207.4 457.5 L1208.3 464.5 L1204.7 464.5 L1205.6 457.5 Z" fill="#000"/>
<circle cx="1206.3" cy="513.2" r="6.5" fill="#fff" stroke="#000" stroke-width="1"/>
<text x="1206.3" y="516.0" font-size="7.8" text-anchor="middle" class="t s" textLength="8.4" lengthAdjust="spacingAndGlyphs">26</text>
<text x="1200.5" y="494.0" font-size="12" fill="#000" text-anchor="middle" textLength="6" lengthAdjust="spacingAndGlyphs" transform="rotate(-90 1200.5 494.0)" class="t">8</text>
<text x="1194.5" y="475.0" font-size="6" fill="#000" text-anchor="middle" textLength="17" lengthAdjust="spacingAndGlyphs" transform="rotate(-90 1194.5 475.0)" class="t">+0,036</text>
<line x1="1168.5" y1="437.7" x2="1168.5" y2="493.7" stroke="#000" stroke-width="1"/>
<path d="M1168.3 437.7 L1194.4 455.2" fill="none" stroke="#000" stroke-width="1" stroke-linejoin="round"/>
<path d="M1192.7 455.1 L1186.3 452.0 L1188.3 449.0 L1193.7 453.6 Z" fill="#000"/>
<path d="M1195.5 440.0 L1187.5 448.0" fill="none" stroke="#000" stroke-width="1" stroke-linejoin="round"/>
<path d="M1195.1 441.7 L1190.8 447.3 L1188.2 444.7 L1193.8 440.4 Z" fill="#000"/>
<line x1="1151.5" y1="440.0" x2="1151.5" y2="477.7" stroke="#000" stroke-width="1"/>
<path d="M1151.1 477.7 L1168.3 486.5" fill="none" stroke="#000" stroke-width="1" stroke-linejoin="round"/>
<path d="M1158.9 493.7 L1168.3 487.6" fill="none" stroke="#000" stroke-width="1" stroke-linejoin="round"/>
<text x="1162.0" y="462.0" font-size="12" fill="#000" text-anchor="middle" textLength="31" lengthAdjust="spacingAndGlyphs" transform="rotate(-90 1162.0 462.0)" class="t">Ra 3,2</text>
<path d="M965.4 646.5 L953.4 657.8 L953.4 753.3 L965.4 764.8" fill="none" stroke="#000" stroke-width="1" stroke-linejoin="round"/>
<line x1="965.5" y1="646.5" x2="965.5" y2="764.8" stroke="#000" stroke-width="1"/>
<line x1="965.4" y1="646.5" x2="1006.4" y2="646.5" stroke="#000" stroke-width="1"/>
<line x1="1012.1" y1="646.5" x2="1095.4" y2="646.5" stroke="#000" stroke-width="1"/>
<line x1="965.4" y1="764.5" x2="1006.9" y2="764.5" stroke="#000" stroke-width="1"/>
<line x1="1012.6" y1="764.5" x2="1095.4" y2="764.5" stroke="#000" stroke-width="1"/>
<line x1="965.4" y1="654.5" x2="1006.4" y2="654.5" stroke="#000" stroke-width="1"/>
<line x1="1012.1" y1="654.5" x2="1095.4" y2="654.5" stroke="#000" stroke-width="1"/>
<line x1="965.4" y1="757.5" x2="1006.9" y2="757.5" stroke="#000" stroke-width="1"/>
<line x1="1012.6" y1="757.5" x2="1095.4" y2="757.5" stroke="#000" stroke-width="1"/>
<path d="M1006.4 646.5 L1004.3 665.4 L1004.3 683.2 L1006.8 702.1 L1009.2 724.6 L1008.8 745.9 L1006.9 760.1 L1006.9 764.8" fill="none" stroke="#000" stroke-width="1" stroke-linejoin="round"/>
<path d="M1012.1 646.5 L1010.0 665.4 L1010.0 683.2 L1012.5 702.1 L1014.9 724.6 L1014.5 745.9 L1012.6 760.1 L1012.6 764.8" fill="none" stroke="#000" stroke-width="1" stroke-linejoin="round"/>
<line x1="1095.5" y1="646.5" x2="1095.5" y2="764.8" stroke="#000" stroke-width="1"/>
<line x1="1095.4" y1="656.5" x2="1158.0" y2="656.5" stroke="#3574ba" stroke-width="1"/>
<line x1="1158.0" y1="656.5" x2="1205.7" y2="656.5" stroke="#000" stroke-width="1"/>
<line x1="1095.4" y1="755.5" x2="1158.0" y2="755.5" stroke="#3574ba" stroke-width="1"/>
<line x1="1158.0" y1="755.5" x2="1205.7" y2="755.5" stroke="#000" stroke-width="1"/>
<path d="M1205.7 656.5 L1209.6 660.0 L1209.6 751.2 L1205.7 755.5" fill="none" stroke="#000" stroke-width="1" stroke-linejoin="round"/>
<line x1="1205.5" y1="656.5" x2="1205.5" y2="755.5" stroke="#000" stroke-width="1"/>
<path d="M1118.8 690.9 L1174.7 690.9 A15.2 15.2 0 0 1 1174.7 721.2 L1118.8 721.2 A15.2 15.2 0 0 1 1118.8 690.9 Z" fill="none" stroke="#000" stroke-width="1"/>
<line x1="1209.6" y1="666.5" x2="1239.4" y2="666.5" stroke="#3574ba" stroke-width="1"/>
<line x1="1239.4" y1="666.5" x2="1269.1" y2="666.5" stroke="#000" stroke-width="1"/>
<line x1="1209.6" y1="745.5" x2="1239.4" y2="745.5" stroke="#3574ba" stroke-width="1"/>
<line x1="1239.4" y1="745.5" x2="1269.1" y2="745.5" stroke="#000" stroke-width="1"/>
<path d="M1269.1 666.5 Q1272.6 666.5 1272.6 670 L1272.6 686 L1261.7 686 L1261.7 726.2 L1272.6 726.2 L1272.6 742 Q1272.6 745.5 1269.1 745.5" fill="none" stroke="#000" stroke-width="1"/>
<line x1="945.2" y1="706.5" x2="1278.5" y2="706.5" stroke="#c48a58" stroke-width="1" stroke-dasharray="36 3 3 3"/>
<line x1="1158.5" y1="656.5" x2="1158.5" y2="767.5" stroke="#000" stroke-width="1"/>
<path d="M1159.4 658.5 L1160.3 665.5 L1156.7 665.5 L1157.6 658.5 Z" fill="#000"/>
<path d="M1157.6 753.5 L1156.7 746.5 L1160.3 746.5 L1159.4 753.5 Z" fill="#000"/>
<circle cx="1158.0" cy="774.0" r="6.5" fill="#fff" stroke="#000" stroke-width="1"/>
<text x="1158.0" y="776.8" font-size="7.8" text-anchor="middle" class="t s" textLength="8.4" lengthAdjust="spacingAndGlyphs">31</text>
<text x="1152.5" y="707.8" font-size="11" fill="#000" text-anchor="middle" transform="rotate(-90 1152.5 707.8)" class="t">Ø25h7<tspan font-size="6" dy="2">(-0,021)</tspan></text>
<line x1="1241.5" y1="666.5" x2="1241.5" y2="767.5" stroke="#000" stroke-width="1"/>
<path d="M1242.4 668.5 L1243.3 675.5 L1239.7 675.5 L1240.6 668.5 Z" fill="#000"/>
<path d="M1240.6 743.5 L1239.7 736.5 L1243.3 736.5 L1242.4 743.5 Z" fill="#000"/>
<circle cx="1241.5" cy="774.0" r="6.5" fill="#fff" stroke="#000" stroke-width="1"/>
<text x="1241.5" y="776.8" font-size="7.8" text-anchor="middle" class="t s" textLength="8.4" lengthAdjust="spacingAndGlyphs">32</text>
<text x="1234.0" y="708.8" font-size="11" fill="#000" text-anchor="middle" transform="rotate(-90 1234.0 708.8)" class="t">Ø20h7<tspan font-size="6" dy="2">(-0,021)</tspan></text>
<path d="M1122.1 647.0 L1129.3 656.3 L1138.4 639.4 L1180.8 639.4" fill="none" stroke="#000" stroke-width="1" stroke-linejoin="round"/>
<text x="1140.2" y="651.3" font-size="11" fill="#000" text-anchor="start" textLength="34" lengthAdjust="spacingAndGlyphs" class="t">Ra 1,25</text>
<path d="M1220.9 656.7 L1227.4 666.5 L1236.1 649.1 L1278.5 649.1" fill="none" stroke="#000" stroke-width="1" stroke-linejoin="round"/>
<text x="1238.3" y="661.1" font-size="11" fill="#000" text-anchor="start" textLength="34" lengthAdjust="spacingAndGlyphs" class="t">Ra 1,25</text>
<path d="M1046.2 637.2 L1049.0 637.2 L1055.5 645.9 L1062.0 637.2 L1064.6 637.2" fill="none" stroke="#000" stroke-width="1" stroke-linejoin="round"/>
<line x1="943.5" y1="670.8" x2="943.5" y2="689.3" stroke="#000" stroke-width="1"/>
<path d="M943.5 674.5 L953.4 679.5 L943.5 684.5" fill="none" stroke="#000" stroke-width="1" stroke-linejoin="round"/>
<text x="1283.6" y="1099.5" font-size="8" fill="#000" textLength="12.3" lengthAdjust="spacingAndGlyphs" class="t s">Изм.</text>
<text x="1297.1" y="1099.5" font-size="8" fill="#000" textLength="16.3" lengthAdjust="spacingAndGlyphs" class="t s">Лист</text>
<text x="1322.5" y="1099.5" font-size="8" fill="#000" textLength="31.5" lengthAdjust="spacingAndGlyphs" class="t s">№ докум.</text>
<text x="1367.0" y="1099.5" font-size="8" fill="#000" textLength="16.7" lengthAdjust="spacingAndGlyphs" class="t s">Подп.</text>
<text x="1392.4" y="1099.5" font-size="8" fill="#000" textLength="15.8" lengthAdjust="spacingAndGlyphs" class="t s">Дата</text>
<text x="1283.6" y="1109.6" font-size="8" fill="#000" textLength="24.9" lengthAdjust="spacingAndGlyphs" class="t s">Разраб.</text>
<text x="1283.6" y="1119.6" font-size="8" fill="#000" textLength="17.0" lengthAdjust="spacingAndGlyphs" class="t s">Пров.</text>
<text x="1283.6" y="1129.6" font-size="8" fill="#000" textLength="27.5" lengthAdjust="spacingAndGlyphs" class="t s">Т.контр.</text>
<text x="1283.6" y="1148.8" font-size="8" fill="#000" textLength="27.5" lengthAdjust="spacingAndGlyphs" class="t s">Н.контр.</text>
<text x="1283.6" y="1158.0" font-size="8" fill="#000" textLength="14.4" lengthAdjust="spacingAndGlyphs" class="t s">Утв.</text>
<text x="1417.8" y="1098.6" font-size="12" fill="#000" textLength="120.7" lengthAdjust="spacingAndGlyphs" class="t w">Схема технологического</text>
<text x="1418.7" y="1110.8" font-size="12" fill="#000" textLength="117.2" lengthAdjust="spacingAndGlyphs" class="t w">процесса изготовления</text>
<text x="1445.8" y="1123.6" font-size="12" fill="#000" textLength="64.7" lengthAdjust="spacingAndGlyphs" class="t w">детали винт</text>
<text x="1430.9" y="1168.6" font-size="8" fill="#000" textLength="35" lengthAdjust="spacingAndGlyphs" class="t s">Копировал</text>
<text x="1555.3" y="1089.9" font-size="8" fill="#000" textLength="14.9" lengthAdjust="spacingAndGlyphs" class="t s">Лит.</text>
<text x="1583.0" y="1089.9" font-size="8" fill="#000" textLength="20.7" lengthAdjust="spacingAndGlyphs" class="t s">Масса</text>
<text x="1612.0" y="1089.9" font-size="8" fill="#000" textLength="31.5" lengthAdjust="spacingAndGlyphs" class="t s">Масштаб</text>
<text x="1551.2" y="1129.2" font-size="8" fill="#000" textLength="17.8" lengthAdjust="spacingAndGlyphs" class="t s">Лист</text>
<text x="1592.2" y="1129.2" font-size="8" fill="#000" textLength="26" lengthAdjust="spacingAndGlyphs" class="t s">Листов</text>
<text x="1633.5" y="1129.2" font-size="8" fill="#000" class="t s">1</text>
<text x="1569.8" y="1168.1" font-size="8" fill="#000" textLength="26.5" lengthAdjust="spacingAndGlyphs" class="t s">Формат</text>
<text x="1609.1" y="1168.1" font-size="8" fill="#000" textLength="7.5" lengthAdjust="spacingAndGlyphs" class="t s">А1</text>
<text x="25.3" y="654.0" font-size="8.5" text-anchor="middle" textLength="45" lengthAdjust="spacingAndGlyphs" transform="rotate(-90 25.3 654.0)" class="t" font-weight="bold">Перв. примен.</text>
<text x="25.3" y="774.7" font-size="8.5" text-anchor="middle" textLength="31" lengthAdjust="spacingAndGlyphs" transform="rotate(-90 25.3 774.7)" class="t" font-weight="bold">Справ. №</text>
<text x="25.3" y="914.6" font-size="8.5" text-anchor="middle" textLength="53" lengthAdjust="spacingAndGlyphs" transform="rotate(-90 25.3 914.6)" class="t" font-weight="bold">Подп. и дата</text>
<text x="25.3" y="969.9" font-size="8.5" text-anchor="middle" textLength="44" lengthAdjust="spacingAndGlyphs" transform="rotate(-90 25.3 969.9)" class="t" font-weight="bold">Инв. № дубл.</text>
<text x="25.3" y="1019.0" font-size="8.5" text-anchor="middle" textLength="44" lengthAdjust="spacingAndGlyphs" transform="rotate(-90 25.3 1019.0)" class="t" font-weight="bold">Взам. инв. №</text>
<text x="25.3" y="1083.0" font-size="8.5" text-anchor="middle" textLength="52" lengthAdjust="spacingAndGlyphs" transform="rotate(-90 25.3 1083.0)" class="t" font-weight="bold">Подп. и дата</text>
<text x="25.3" y="1136.6" font-size="8.5" text-anchor="middle" textLength="47" lengthAdjust="spacingAndGlyphs" transform="rotate(-90 25.3 1136.6)" class="t" font-weight="bold">Инв. № подл.</text>
<path d="M678.0 756.8 L681.9 760.6 L685.7 752.2 L705.4 752.2" fill="none" stroke="#000" stroke-width="1" stroke-linejoin="round"/>
<text x="683.0" y="759.0" font-size="7.8" fill="#000" textLength="20.5" lengthAdjust="spacingAndGlyphs" class="t">Ra 12,5.</text>
<path d="M1422.7 451.0 L1426.5 454.0 L1429.6 446.4 L1449.3 446.4" fill="none" stroke="#000" stroke-width="1" stroke-linejoin="round"/>
<text x="1430.3" y="452.5" font-size="7.8" fill="#000" textLength="20.5" lengthAdjust="spacingAndGlyphs" class="t">Ra 3,2.</text>
<path d="M1407.5 705.8 L1412.1 711.2 L1415.1 703.3 L1434.9 703.3" fill="none" stroke="#000" stroke-width="1" stroke-linejoin="round"/>
<text x="1415.5" y="709.6" font-size="7.8" fill="#000" textLength="21" lengthAdjust="spacingAndGlyphs" class="t">Ra 1,25.</text>
<path d="M1409.0 725.6 L1412.8 731.0 L1415.9 722.6 L1436.4 722.6" fill="none" stroke="#000" stroke-width="1" stroke-linejoin="round"/>
<text x="1416.5" y="729.4" font-size="7.8" fill="#000" textLength="21" lengthAdjust="spacingAndGlyphs" class="t">Ra 1,25.</text>
</svg></body></html>
